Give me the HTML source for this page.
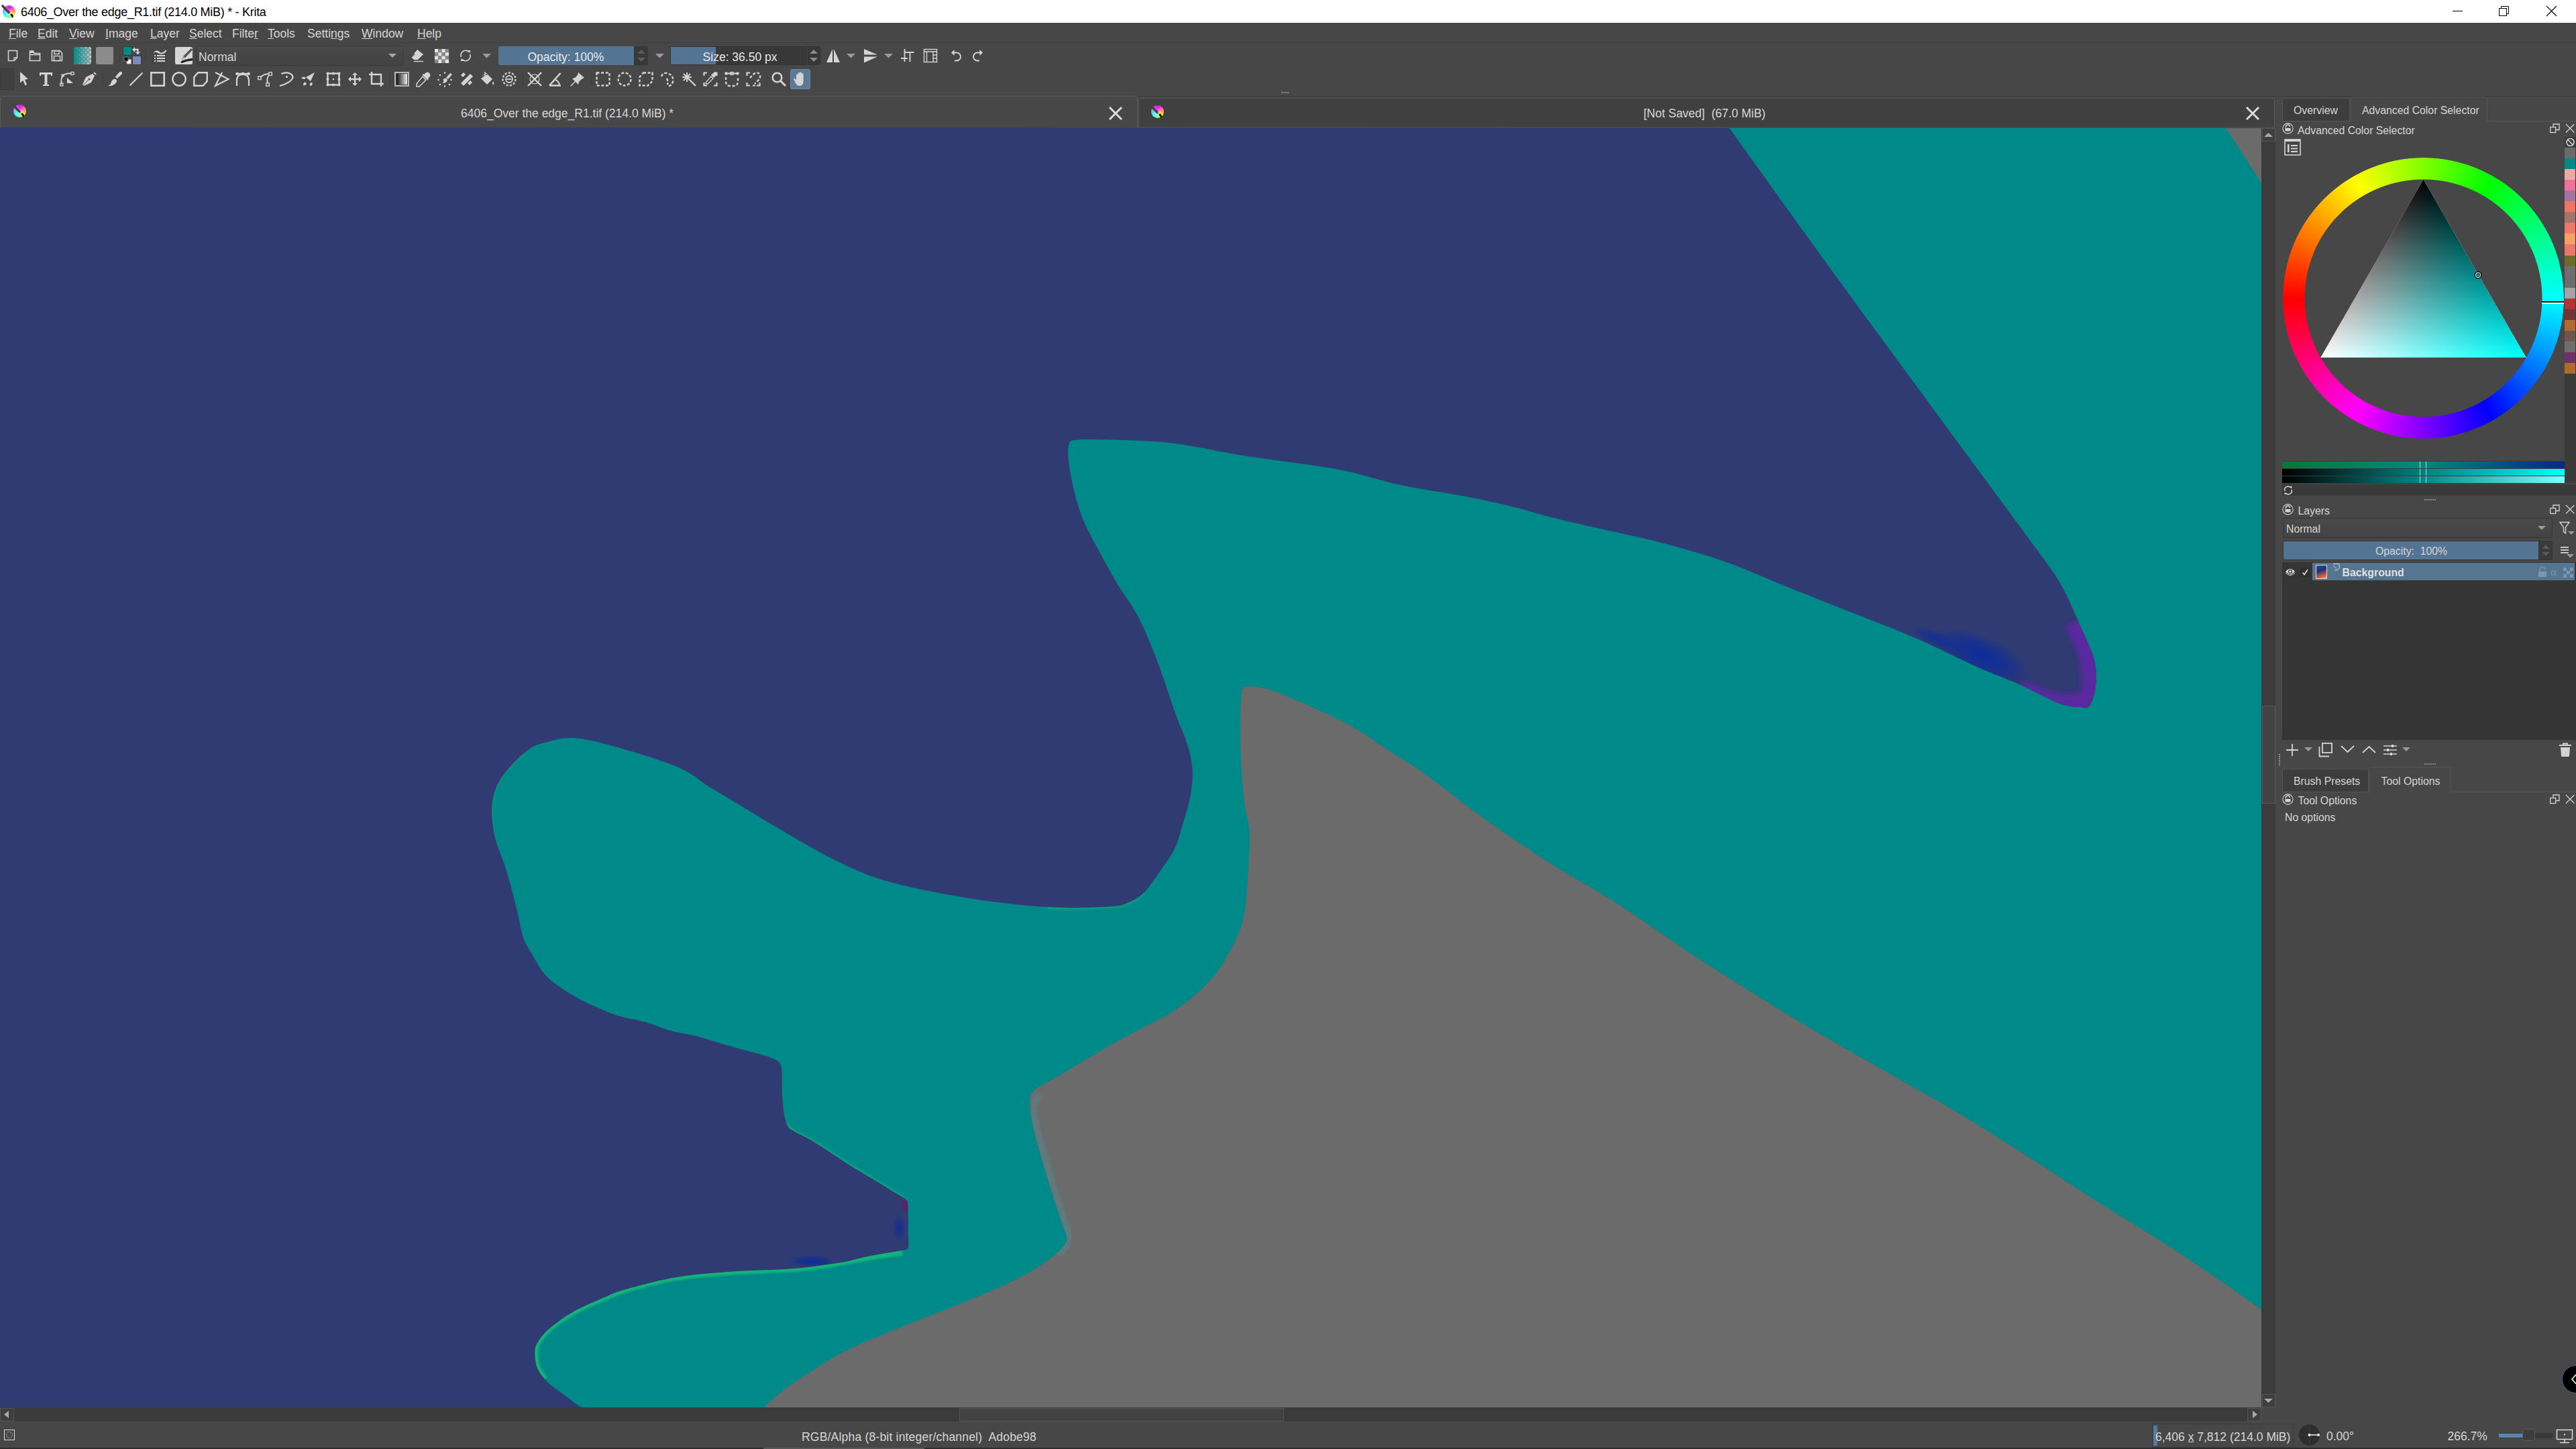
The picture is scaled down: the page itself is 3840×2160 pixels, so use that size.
<!DOCTYPE html>
<html><head><meta charset="utf-8"><title>Krita</title>
<style>
html,body{margin:0;padding:0;}
body{width:3840px;height:2160px;position:relative;overflow:hidden;background:#474747;font-family:"Liberation Sans",sans-serif;}
.t{position:absolute;white-space:pre;line-height:1;}
.r{position:absolute;}
svg.r{overflow:visible;}
</style></head><body>
<div class="r" style="left:0px;top:0px;width:3840px;height:34px;background:#ffffff;"></div><div class="r" style="left:4px;top:7.5px;width:19px;height:19px;border-radius:50%;background:radial-gradient(circle at 40% 60%,rgba(255,255,255,0.45),rgba(255,255,255,0) 55%),conic-gradient(#ff00ff,#ff60b0 50deg,#ffb060 100deg,#ffff00 130deg,#80ff80 180deg,#00ffff 225deg,#60b0ff 270deg,#b070ff 315deg,#ff00ff)"></div><svg class="r" style="left:2px;top:6.5px" width="23" height="23" viewBox="0 0 23 23"><path d="M1.8 1.8 L11.8 12.2" stroke="#404040" stroke-width="3.4" stroke-linecap="round"/><path d="M11.8 12.2 L14 14.4" stroke="#b8b8b8" stroke-width="2.6"/><path d="M13.2 15.2 L15.2 13.2 Q18 14.5 18 17.5 Q17.6 19 16.3 19.8 Q15.6 17 13.2 15.2Z" fill="#111"/></svg><div class="t" style="left:31px;top:9.26px;font-size:18px;color:#000000;font-weight:normal;letter-spacing:-0.29px">6406_Over the edge_R1.tif (214.0 MiB) * - Krita</div><svg class="r" style="left:3650px;top:0px" width="190" height="34"><line x1="6" y1="16.5" x2="21" y2="16.5" stroke="#000" stroke-width="1"/><rect x="75.5" y="12.5" width="11" height="11" fill="none" stroke="#000" stroke-width="1"/><path d="M78.5 12.5 V9.5 H89.5 V20.5 H86.5" fill="none" stroke="#000" stroke-width="1"/><path d="M146 9 L161 24 M161 9 L146 24" stroke="#000" stroke-width="1.1"/></svg><div class="r" style="left:0px;top:34px;width:3840px;height:29px;background:#474747;"></div><div class="r" style="left:0px;top:63px;width:3840px;height:1px;background:#3e3e3e;"></div><div class="t" style="left:13px;top:42.09px;font-size:17.5px;color:#d6d6d6;font-weight:normal;"><u>F</u>ile</div><div class="t" style="left:56px;top:42.09px;font-size:17.5px;color:#d6d6d6;font-weight:normal;"><u>E</u>dit</div><div class="t" style="left:103px;top:42.09px;font-size:17.5px;color:#d6d6d6;font-weight:normal;"><u>V</u>iew</div><div class="t" style="left:157px;top:42.09px;font-size:17.5px;color:#d6d6d6;font-weight:normal;"><u>I</u>mage</div><div class="t" style="left:224px;top:42.09px;font-size:17.5px;color:#d6d6d6;font-weight:normal;"><u>L</u>ayer</div><div class="t" style="left:282px;top:42.09px;font-size:17.5px;color:#d6d6d6;font-weight:normal;"><u>S</u>elect</div><div class="t" style="left:346px;top:42.09px;font-size:17.5px;color:#d6d6d6;font-weight:normal;">Filte<u>r</u></div><div class="t" style="left:399px;top:42.09px;font-size:17.5px;color:#d6d6d6;font-weight:normal;"><u>T</u>ools</div><div class="t" style="left:458px;top:42.09px;font-size:17.5px;color:#d6d6d6;font-weight:normal;">Setti<u>n</u>gs</div><div class="t" style="left:539px;top:42.09px;font-size:17.5px;color:#d6d6d6;font-weight:normal;"><u>W</u>indow</div><div class="t" style="left:622px;top:42.09px;font-size:17.5px;color:#d6d6d6;font-weight:normal;"><u>H</u>elp</div><div class="r" style="left:0px;top:64px;width:3840px;height:79px;background:#474747;"></div><div class="r" style="left:0px;top:143px;width:3840px;height:1px;background:#3a3a3a;"></div><svg class="r" style="left:11px;top:74px;" width="17" height="18" viewBox="0 0 17 18"><path d="M1.5 1.5 H14.5 V12 L10 16.5 H1.5 Z" fill="none" stroke="#d4d4d4" stroke-width="1.6"/><path d="M14.5 12 H10 V16.5" fill="none" stroke="#d4d4d4" stroke-width="1.4"/></svg><svg class="r" style="left:43px;top:74px;" width="18" height="18" viewBox="0 0 18 18"><path d="M1.5 4.5 V16.5 H16.5 V5.5 H8 L6.5 2 H1.5 Z" fill="none" stroke="#d4d4d4" stroke-width="1.6"/><path d="M1.5 7.5 H16.5" fill="none" stroke="#d4d4d4" stroke-width="1.6"/><path d="M2 2 H6.5 L7.5 5 H2Z" fill="#d4d4d4"/></svg><svg class="r" style="left:76px;top:74px;" width="18" height="18" viewBox="0 0 18 18"><path d="M1.5 1.5 H13 L16.5 5 V16.5 H1.5 Z" fill="none" stroke="#d4d4d4" stroke-width="1.6"/><rect x="5" y="2" width="7" height="4.5" fill="none" stroke="#d4d4d4" stroke-width="1.4"/><rect x="4.5" y="9.5" width="9" height="7" fill="none" stroke="#d4d4d4" stroke-width="1.4"/></svg><svg class="r" style="left:110px;top:70px;" width="26" height="26" viewBox="0 0 26 26"><defs><linearGradient id="gsw" x1="0" x2="1"><stop offset="0" stop-color="#008989" stop-opacity="0.97"/><stop offset="0.35" stop-color="#008989" stop-opacity="0.7"/><stop offset="1" stop-color="#008989" stop-opacity="0.12"/></linearGradient><clipPath id="gcl"><rect x="0" y="0" width="26" height="26" rx="3"/></clipPath></defs><g clip-path="url(#gcl)"><rect x="0.0" y="0.0" width="3.25" height="3.25" fill="#a8a8a8"/><rect x="0.0" y="3.25" width="3.25" height="3.25" fill="#e4e4e4"/><rect x="0.0" y="6.5" width="3.25" height="3.25" fill="#a8a8a8"/><rect x="0.0" y="9.75" width="3.25" height="3.25" fill="#e4e4e4"/><rect x="0.0" y="13.0" width="3.25" height="3.25" fill="#a8a8a8"/><rect x="0.0" y="16.25" width="3.25" height="3.25" fill="#e4e4e4"/><rect x="0.0" y="19.5" width="3.25" height="3.25" fill="#a8a8a8"/><rect x="0.0" y="22.75" width="3.25" height="3.25" fill="#e4e4e4"/><rect x="3.25" y="0.0" width="3.25" height="3.25" fill="#e4e4e4"/><rect x="3.25" y="3.25" width="3.25" height="3.25" fill="#a8a8a8"/><rect x="3.25" y="6.5" width="3.25" height="3.25" fill="#e4e4e4"/><rect x="3.25" y="9.75" width="3.25" height="3.25" fill="#a8a8a8"/><rect x="3.25" y="13.0" width="3.25" height="3.25" fill="#e4e4e4"/><rect x="3.25" y="16.25" width="3.25" height="3.25" fill="#a8a8a8"/><rect x="3.25" y="19.5" width="3.25" height="3.25" fill="#e4e4e4"/><rect x="3.25" y="22.75" width="3.25" height="3.25" fill="#a8a8a8"/><rect x="6.5" y="0.0" width="3.25" height="3.25" fill="#a8a8a8"/><rect x="6.5" y="3.25" width="3.25" height="3.25" fill="#e4e4e4"/><rect x="6.5" y="6.5" width="3.25" height="3.25" fill="#a8a8a8"/><rect x="6.5" y="9.75" width="3.25" height="3.25" fill="#e4e4e4"/><rect x="6.5" y="13.0" width="3.25" height="3.25" fill="#a8a8a8"/><rect x="6.5" y="16.25" width="3.25" height="3.25" fill="#e4e4e4"/><rect x="6.5" y="19.5" width="3.25" height="3.25" fill="#a8a8a8"/><rect x="6.5" y="22.75" width="3.25" height="3.25" fill="#e4e4e4"/><rect x="9.75" y="0.0" width="3.25" height="3.25" fill="#e4e4e4"/><rect x="9.75" y="3.25" width="3.25" height="3.25" fill="#a8a8a8"/><rect x="9.75" y="6.5" width="3.25" height="3.25" fill="#e4e4e4"/><rect x="9.75" y="9.75" width="3.25" height="3.25" fill="#a8a8a8"/><rect x="9.75" y="13.0" width="3.25" height="3.25" fill="#e4e4e4"/><rect x="9.75" y="16.25" width="3.25" height="3.25" fill="#a8a8a8"/><rect x="9.75" y="19.5" width="3.25" height="3.25" fill="#e4e4e4"/><rect x="9.75" y="22.75" width="3.25" height="3.25" fill="#a8a8a8"/><rect x="13.0" y="0.0" width="3.25" height="3.25" fill="#a8a8a8"/><rect x="13.0" y="3.25" width="3.25" height="3.25" fill="#e4e4e4"/><rect x="13.0" y="6.5" width="3.25" height="3.25" fill="#a8a8a8"/><rect x="13.0" y="9.75" width="3.25" height="3.25" fill="#e4e4e4"/><rect x="13.0" y="13.0" width="3.25" height="3.25" fill="#a8a8a8"/><rect x="13.0" y="16.25" width="3.25" height="3.25" fill="#e4e4e4"/><rect x="13.0" y="19.5" width="3.25" height="3.25" fill="#a8a8a8"/><rect x="13.0" y="22.75" width="3.25" height="3.25" fill="#e4e4e4"/><rect x="16.25" y="0.0" width="3.25" height="3.25" fill="#e4e4e4"/><rect x="16.25" y="3.25" width="3.25" height="3.25" fill="#a8a8a8"/><rect x="16.25" y="6.5" width="3.25" height="3.25" fill="#e4e4e4"/><rect x="16.25" y="9.75" width="3.25" height="3.25" fill="#a8a8a8"/><rect x="16.25" y="13.0" width="3.25" height="3.25" fill="#e4e4e4"/><rect x="16.25" y="16.25" width="3.25" height="3.25" fill="#a8a8a8"/><rect x="16.25" y="19.5" width="3.25" height="3.25" fill="#e4e4e4"/><rect x="16.25" y="22.75" width="3.25" height="3.25" fill="#a8a8a8"/><rect x="19.5" y="0.0" width="3.25" height="3.25" fill="#a8a8a8"/><rect x="19.5" y="3.25" width="3.25" height="3.25" fill="#e4e4e4"/><rect x="19.5" y="6.5" width="3.25" height="3.25" fill="#a8a8a8"/><rect x="19.5" y="9.75" width="3.25" height="3.25" fill="#e4e4e4"/><rect x="19.5" y="13.0" width="3.25" height="3.25" fill="#a8a8a8"/><rect x="19.5" y="16.25" width="3.25" height="3.25" fill="#e4e4e4"/><rect x="19.5" y="19.5" width="3.25" height="3.25" fill="#a8a8a8"/><rect x="19.5" y="22.75" width="3.25" height="3.25" fill="#e4e4e4"/><rect x="22.75" y="0.0" width="3.25" height="3.25" fill="#e4e4e4"/><rect x="22.75" y="3.25" width="3.25" height="3.25" fill="#a8a8a8"/><rect x="22.75" y="6.5" width="3.25" height="3.25" fill="#e4e4e4"/><rect x="22.75" y="9.75" width="3.25" height="3.25" fill="#a8a8a8"/><rect x="22.75" y="13.0" width="3.25" height="3.25" fill="#e4e4e4"/><rect x="22.75" y="16.25" width="3.25" height="3.25" fill="#a8a8a8"/><rect x="22.75" y="19.5" width="3.25" height="3.25" fill="#e4e4e4"/><rect x="22.75" y="22.75" width="3.25" height="3.25" fill="#a8a8a8"/><rect width="26" height="26" fill="url(#gsw)"/></g></svg><svg class="r" style="left:143px;top:70px;" width="26" height="26" viewBox="0 0 26 26"><defs><filter id="nz" x="0" y="0" width="100%" height="100%"><feTurbulence type="fractalNoise" baseFrequency="0.9" numOctaves="1" seed="3"/><feColorMatrix type="matrix" values="0 0 0 0 0.53  0 0 0 0 0.53  0 0 0 0 0.53  0 0 0 0.35 0"/></filter></defs><rect width="26" height="26" rx="3" fill="#808080"/><rect width="26" height="26" rx="3" filter="url(#nz)"/></svg><div class="r" style="left:178px;top:73px;width:1px;height:20px;background:#3d3d3d"></div><svg class="r" style="left:183px;top:69px;" width="29" height="29" viewBox="0 0 29 29"><rect x="0.5" y="0.5" width="13" height="13" fill="#008989" stroke="#3a3a3a"/><rect x="14.5" y="14.5" width="13" height="13" fill="#7f88b8" stroke="#3a3a3a"/><rect x="6" y="19.7" width="6.5" height="6.5" fill="#fff" stroke="#888" stroke-width="0.8"/><rect x="2" y="16" width="6" height="6" fill="#000" stroke="#888" stroke-width="0.9"/><path d="M17.5 5 H22.4 V8.6" stroke="#d4d4d4" stroke-width="2.6" fill="none"/><rect x="19.3" y="6.2" width="2" height="2" fill="#474747"/><path d="M14 5 L18 1.3 V8.7 Z" fill="#d4d4d4"/><path d="M18.6 8.4 H26.2 L22.4 12.2 Z" fill="#d4d4d4"/></svg><div class="r" style="left:216px;top:73px;width:1px;height:20px;background:#3d3d3d"></div><svg class="r" style="left:228px;top:72px;" width="22" height="22" viewBox="0 0 22 22"><path d="M0.3 8.2 Q3 2.8 6.5 3.6 Q9 4.3 11 6 Q14 8 19 2.6 Q21 2 20 4.5 Q16 9.5 11 8.3 Q8 7.5 6 6.2 Q3 5 0.3 8.2 Z" fill="#d4d4d4"/><rect x="2" y="9.9" width="2.1" height="2.1" fill="#d4d4d4"/><rect x="5.9" y="9.9" width="12.1" height="2.1" fill="#d4d4d4"/><rect x="2" y="13.9" width="2.1" height="2.1" fill="#d4d4d4"/><rect x="5.9" y="13.9" width="12.1" height="2.1" fill="#d4d4d4"/><rect x="2" y="17.9" width="2.1" height="2.1" fill="#d4d4d4"/><rect x="5.9" y="17.9" width="12.1" height="2.1" fill="#d4d4d4"/></svg><svg class="r" style="left:261px;top:70px;" width="26" height="26" viewBox="0 0 26 26"><rect width="26" height="26" rx="2.5" fill="#d6d6d6"/><path d="M12 14 L24 2 L26 4 L26 4.5 L14.5 16.5 Z" fill="#4a4a4a"/><path d="M13.2 15.2 L25 3.3" stroke="#777" stroke-width="0.8"/><path d="M12 14 L14.5 16.5 L9.6 18.6 Z" fill="#a8a8a8"/><path d="M9.6 18.6 L10.6 17 L11.3 17.7 Z" fill="#333"/><path d="M8.5 22 Q12 18.5 26 16.8 V20.3 Q17 21 10.5 24 Q8 24.5 8.5 22 Z" fill="#222"/></svg><div class="r" style="left:292px;top:68px;width:309px;height:30px;background:linear-gradient(#4a4a4a,#424242);border:1px solid #383838;border-radius:3px;box-sizing:border-box"></div><svg class="r" style="left:578px;top:79px;" width="14" height="8" viewBox="0 0 14 8"><path d="M1 1 H13 L7 7 Z" fill="#a8a8a8"/></svg><svg class="r" style="left:611px;top:73px;" width="22" height="20" viewBox="0 0 22 20"><path d="M11 1 L20 8 L12 16 H6 L2 12 Z" fill="#d4d4d4"/><path d="M6 18.5 H20" stroke="#d4d4d4" stroke-width="1.5"/><path d="M2.5 12 L7 7.5" stroke="#474747" stroke-width="1.2"/></svg><svg class="r" style="left:648px;top:73px;" width="21" height="21" viewBox="0 0 21 21"><rect x="0.0" y="0.0" width="5.3" height="5.3" fill="#e6e6e6"/><rect x="0.0" y="5.25" width="5.3" height="5.3" fill="#8a8a8a"/><rect x="0.0" y="10.5" width="5.3" height="5.3" fill="#e6e6e6"/><rect x="0.0" y="15.75" width="5.3" height="5.3" fill="#8a8a8a"/><rect x="5.25" y="0.0" width="5.3" height="5.3" fill="#8a8a8a"/><rect x="5.25" y="5.25" width="5.3" height="5.3" fill="#e6e6e6"/><rect x="5.25" y="10.5" width="5.3" height="5.3" fill="#8a8a8a"/><rect x="5.25" y="15.75" width="5.3" height="5.3" fill="#e6e6e6"/><rect x="10.5" y="0.0" width="5.3" height="5.3" fill="#e6e6e6"/><rect x="10.5" y="5.25" width="5.3" height="5.3" fill="#8a8a8a"/><rect x="10.5" y="10.5" width="5.3" height="5.3" fill="#e6e6e6"/><rect x="10.5" y="15.75" width="5.3" height="5.3" fill="#8a8a8a"/><rect x="15.75" y="0.0" width="5.3" height="5.3" fill="#8a8a8a"/><rect x="15.75" y="5.25" width="5.3" height="5.3" fill="#e6e6e6"/><rect x="15.75" y="10.5" width="5.3" height="5.3" fill="#8a8a8a"/><rect x="15.75" y="15.75" width="5.3" height="5.3" fill="#e6e6e6"/></svg><svg class="r" style="left:684px;top:73px;" width="20" height="20" viewBox="0 0 20 20"><path d="M3.5 12 A7 7 0 0 1 15 4.5" fill="none" stroke="#d4d4d4" stroke-width="1.8"/><path d="M16.5 8 A7 7 0 0 1 5 15.5" fill="none" stroke="#d4d4d4" stroke-width="1.8"/><path d="M13 2 L17 2 L17 6Z" fill="#d4d4d4"/><path d="M7 18 L3 18 L3 14Z" fill="#d4d4d4"/></svg><svg class="r" style="left:719px;top:80px;" width="13" height="7" viewBox="0 0 13 7"><path d="M0 0 H13 L6.5 6.5 Z" fill="#9a9a9a"/></svg><div class="r" style="left:743px;top:69px;width:223px;height:28px;background:#383838;border:1px solid #353535;border-radius:3px;box-sizing:border-box"></div><div class="r" style="left:743px;top:69px;width:202px;height:28px;background:#547494;border-radius:3px 0 0 3px"></div><svg class="r" style="left:946px;top:69px;" width="20" height="28" viewBox="0 0 20 28"><path d="M4 11 L10 5 L16 11 Z" fill="#5c5c5c"/><path d="M4 17 L10 23 L16 17 Z" fill="#5c5c5c"/></svg><svg class="r" style="left:977px;top:80px;" width="13" height="7" viewBox="0 0 13 7"><path d="M0 0 H13 L6.5 6.5 Z" fill="#9a9a9a"/></svg><div class="r" style="left:999px;top:69px;width:224px;height:28px;background:#383838;border:1px solid #333;border-radius:3px;box-sizing:border-box"></div><div class="r" style="left:1000px;top:70px;width:67px;height:26px;background:#547494"></div><div class="r" style="left:1203px;top:69px;width:20px;height:28px;border-left:1px solid #444;box-sizing:border-box"></div><svg class="r" style="left:1203px;top:69px;" width="20" height="28" viewBox="0 0 20 28"><path d="M4 11 L10 5 L16 11 Z" fill="#8a8a8a"/><path d="M4 17 L10 23 L16 17 Z" fill="#8a8a8a"/></svg><svg class="r" style="left:1231px;top:73px;" width="22" height="21" viewBox="0 0 22 21"><path d="M10 0 V20 H1 Z" fill="#d4d4d4"/><path d="M12 0 V20 H21 Z" fill="#d4d4d4"/></svg><svg class="r" style="left:1262px;top:80px;" width="13" height="7" viewBox="0 0 13 7"><path d="M0 0 H13 L6.5 6.5 Z" fill="#9a9a9a"/></svg><svg class="r" style="left:1287px;top:73px;" width="22" height="21" viewBox="0 0 22 21"><path d="M1 0 L21 8.5 H1 Z" fill="#d4d4d4"/><path d="M1 20.5 L21 11.5 H1 Z" fill="#d4d4d4"/></svg><svg class="r" style="left:1318px;top:80px;" width="13" height="7" viewBox="0 0 13 7"><path d="M0 0 H13 L6.5 6.5 Z" fill="#9a9a9a"/></svg><svg class="r" style="left:1342px;top:72px;" width="22" height="22" viewBox="0 0 22 22"><path d="M6.5 1 V20 M1 15 H11 M6.5 6 H20.5 M14.5 6 V20" fill="none" stroke="#d4d4d4" stroke-width="1.8"/></svg><svg class="r" style="left:1376px;top:72px;" width="22" height="22" viewBox="0 0 22 22"><rect x="1.5" y="1.5" width="19" height="19" fill="none" stroke="#d4d4d4" stroke-width="1.4"/><path d="M1.5 5 H20.5" fill="none" stroke="#d4d4d4" stroke-width="1.6"/><path d="M5.5 5 V20.5 M15 5 V20.5 M15 10 H20.5 M15 15 H20.5" fill="none" stroke="#d4d4d4" stroke-width="1.4"/></svg><svg class="r" style="left:1417px;top:73px;" width="17" height="20" viewBox="0 0 17 20"><path d="M4 5.5 H9 A6 6 0 0 1 9 17.5 H6" fill="none" stroke="#d4d4d4" stroke-width="1.8"/><path d="M1 5.5 L5.5 1 V10 Z" fill="#d4d4d4"/></svg><svg class="r" style="left:1449px;top:73px;" width="17" height="20" viewBox="0 0 17 20"><path d="M13 5.5 H8 A6 6 0 0 0 8 17.5 H11" fill="none" stroke="#d4d4d4" stroke-width="1.8"/><path d="M16 5.5 L11.5 1 V10 Z" fill="#d4d4d4"/></svg><div class="r" style="left:1910px;top:137px;width:12px;height:2px;background:repeating-linear-gradient(90deg,#888 0 2px,transparent 2px 3px)"></div><div class="r" style="left:0px;top:102px;width:21px;height:32px;background:#404040;border:1px solid #3a3a3a;box-sizing:border-box"></div><svg class="r" style="left:28px;top:107px;" width="22" height="22" viewBox="0 0 22 22"><path d="M2 0 L14 11 L9 11.5 L12 19 L9.5 20.5 L6.5 13 L2 16.5 Z" fill="#d4d4d4"/></svg><svg class="r" style="left:58px;top:107px;" width="22" height="22" viewBox="0 0 22 22"><path d="M1 1 H20 V6 H18 V4 H12.5 V19 H15 V21 H6 V19 H8.5 V4 H3 V6 H1 Z" fill="#d4d4d4"/></svg><svg class="r" style="left:89px;top:107px;" width="22" height="22" viewBox="0 0 22 22"><path d="M2.5 19 V12 Q3 4 12 2.5 H17" fill="none" stroke="#d4d4d4" stroke-width="1.8"/><rect x="0.8" y="17" width="4" height="4" fill="none" stroke="#d4d4d4" stroke-width="1.3"/><rect x="3" y="4" width="3" height="3" fill="none" stroke="#d4d4d4" stroke-width="1.2"/><rect x="17" y="0.5" width="4" height="4" fill="none" stroke="#d4d4d4" stroke-width="1.3"/><path d="M11 9 L20 17 H11 Z" fill="#d4d4d4"/></svg><svg class="r" style="left:122px;top:107px;" width="22" height="22" viewBox="0 0 22 22"><path d="M18 1 L21 4" fill="none" stroke="#d4d4d4" stroke-width="2"/><path d="M16 3 L19 6 L14 16 L3 21 L1 19 L6 8 Z" fill="#d4d4d4"/><circle cx="11" cy="11" r="1.5" fill="#474747"/><path d="M2 20 L10.5 11.5" stroke="#474747" stroke-width="1"/></svg><div class="r" style="left:153px;top:108px;width:1px;height:20px;background:#3d3d3d"></div><svg class="r" style="left:160px;top:107px;" width="22" height="22" viewBox="0 0 22 22"><path d="M16.3 5.7 L19.8 2.2" stroke="#d4d4d4" stroke-width="4.6" stroke-linecap="round"/><path d="M13.2 8.8 L15 7" stroke="#d4d4d4" stroke-width="4.2"/><path d="M11.8 10.4 L14.3 12.9 Q13.5 20.5 0.8 21.5 Q5 19.3 5.8 15.5 Q7 10.8 11.8 10.4 Z" fill="#d4d4d4"/></svg><svg class="r" style="left:192px;top:107px;" width="22" height="22" viewBox="0 0 22 22"><path d="M1.5 20.5 L20.5 1.5" fill="none" stroke="#d4d4d4" stroke-width="2.2"/></svg><svg class="r" style="left:224px;top:107px;" width="22" height="22" viewBox="0 0 22 22"><rect x="1.3" y="1.3" width="19.4" height="19.4" fill="none" stroke="#d4d4d4" stroke-width="2.6"/></svg><svg class="r" style="left:256px;top:107px;" width="22" height="22" viewBox="0 0 22 22"><circle cx="11" cy="11" r="9.7" fill="none" stroke="#d4d4d4" stroke-width="2.4"/></svg><svg class="r" style="left:288px;top:107px;" width="22" height="22" viewBox="0 0 22 22"><path d="M7 1.3 H20.7 V14 L14.5 20.7 H1.3 V8 Z" fill="none" stroke="#d4d4d4" stroke-width="2.4"/></svg><svg class="r" style="left:320px;top:107px;" width="22" height="22" viewBox="0 0 22 22"><path d="M1 1 L20.5 11 L1 21 L11 1" fill="none" stroke="#d4d4d4" stroke-width="2.2" stroke-linejoin="miter"/></svg><svg class="r" style="left:351px;top:107px;" width="22" height="22" viewBox="0 0 22 22"><path d="M2 21 V13 Q2 4 11 4 Q20 4 20 13 V21" fill="none" stroke="#d4d4d4" stroke-width="2.2"/><path d="M1 3 H21" fill="none" stroke="#d4d4d4" stroke-width="2.4"/><circle cx="2.5" cy="3" r="2.3" fill="#d4d4d4"/><circle cx="19.5" cy="3" r="2.3" fill="#d4d4d4"/><rect x="9" y="1" width="4" height="4" fill="#d4d4d4"/></svg><svg class="r" style="left:384px;top:107px;" width="22" height="22" viewBox="0 0 22 22"><path d="M4.5 8.5 Q8 3.5 17 3" fill="none" stroke="#d4d4d4" stroke-width="2"/><path d="M17 5 Q13 10 15 17" fill="none" stroke="#d4d4d4" stroke-width="2"/><rect x="0.8" y="7" width="4.5" height="4.5" fill="none" stroke="#d4d4d4" stroke-width="1.4"/><rect x="16.8" y="0.8" width="4.5" height="4.5" fill="none" stroke="#d4d4d4" stroke-width="1.4"/><rect x="12.8" y="16.8" width="4.5" height="4.5" fill="none" stroke="#d4d4d4" stroke-width="1.4"/></svg><svg class="r" style="left:416px;top:107px;" width="22" height="22" viewBox="0 0 22 22"><path d="M3.5 3 Q10 0 16 2.5 Q22 5 20 10 Q16 17 1 21" fill="none" stroke="#d4d4d4" stroke-width="2.2"/><circle cx="11.5" cy="7.5" r="1.6" fill="#d4d4d4"/></svg><svg class="r" style="left:448px;top:107px;" width="22" height="22" viewBox="0 0 22 22"><path d="M8 8 L21 1 L15 14 Z" fill="#d4d4d4"/><path d="M1 9 Q5 6 8 9 L6 11 Q3 11 1 9Z" fill="#d4d4d4"/><path d="M4 20 Q4 15 8 16 L9 18 Q7 21 4 20Z" fill="#d4d4d4"/><path d="M14 21 Q13 16 17 16 L18 18 Q17 21 14 21Z" fill="#d4d4d4"/></svg><div class="r" style="left:478px;top:108px;width:1px;height:20px;background:#3d3d3d"></div><svg class="r" style="left:486px;top:107px;" width="22" height="22" viewBox="0 0 22 22"><rect x="2.5" y="2.5" width="17" height="17" fill="none" stroke="#d4d4d4" stroke-width="2.4"/><circle cx="2.5" cy="2.5" r="2" fill="#d4d4d4"/><circle cx="2.5" cy="11" r="2" fill="#d4d4d4"/><circle cx="2.5" cy="19.5" r="2" fill="#d4d4d4"/><circle cx="11" cy="2.5" r="2" fill="#d4d4d4"/><circle cx="11" cy="19.5" r="2" fill="#d4d4d4"/><circle cx="19.5" cy="2.5" r="2" fill="#d4d4d4"/><circle cx="19.5" cy="11" r="2" fill="#d4d4d4"/><circle cx="19.5" cy="19.5" r="2" fill="#d4d4d4"/><circle cx="11" cy="11" r="1.3" fill="#d4d4d4"/></svg><svg class="r" style="left:518px;top:107px;" width="22" height="22" viewBox="0 0 22 22"><path d="M11 1 L15 5 H12.2 V9.8 H17 V7 L21 11 L17 15 V12.2 H12.2 V17 H15 L11 21 L7 17 H9.8 V12.2 H5 V15 L1 11 L5 7 V9.8 H9.8 V5 H7 Z" fill="#d4d4d4"/></svg><svg class="r" style="left:550px;top:107px;" width="22" height="22" viewBox="0 0 22 22"><path d="M4 0 V18 H22 M0 4 H18 V22" fill="none" stroke="#d4d4d4" stroke-width="2.4"/></svg><div class="r" style="left:581px;top:108px;width:1px;height:20px;background:#3d3d3d"></div><svg class="r" style="left:588px;top:107px;" width="22" height="22" viewBox="0 0 22 22"><defs><linearGradient id="gt" x1="0" x2="1"><stop offset="0" stop-color="#111"/><stop offset="1" stop-color="#eee"/></linearGradient></defs><rect x="1" y="1" width="20" height="20" fill="none" stroke="#d4d4d4" stroke-width="1.6"/><rect x="3" y="3" width="16" height="16" fill="url(#gt)"/></svg><svg class="r" style="left:620px;top:107px;" width="22" height="22" viewBox="0 0 22 22"><path d="M14 2 Q17 -1 20 2 Q23 5 20 8 L18 10 L19 11 L17.5 12.5 L9.5 4.5 L11 3 L12 4 Z" fill="#d4d4d4"/><path d="M10 7 L15 12 L5 22 H1 V18 Z" fill="none" stroke="#d4d4d4" stroke-width="1.5"/></svg><svg class="r" style="left:652px;top:107px;" width="22" height="22" viewBox="0 0 22 22"><path d="M13 9 L19 2 L22 4 L16 11 Z" fill="#d4d4d4"/><path d="M9 11 Q13 8 15 12 Q14 17 8 17 Q10 14 9 11Z" fill="#d4d4d4"/><circle cx="11" cy="1.5" r="1.3" fill="#d4d4d4"/><circle cx="4" cy="5" r="1.3" fill="#d4d4d4"/><circle cx="1.5" cy="12" r="1.3" fill="#d4d4d4"/><circle cx="4" cy="19" r="1.3" fill="#d4d4d4"/><circle cx="11" cy="21.5" r="1.3" fill="#d4d4d4"/><circle cx="18" cy="19" r="1.3" fill="#d4d4d4"/><circle cx="20.5" cy="12" r="1.3" fill="#d4d4d4"/></svg><svg class="r" style="left:684px;top:107px;" width="22" height="22" viewBox="0 0 22 22"><path d="M3 17 L17 3 L21 7 L7 21 Z" fill="#d4d4d4"/><path d="M3 5 L7 1 L10 4 L6 8 Z" fill="#d4d4d4"/><path d="M13 17 L17 13 L20 16 L16 20 Z" fill="#d4d4d4"/></svg><svg class="r" style="left:716px;top:107px;" width="22" height="22" viewBox="0 0 22 22"><path d="M6 0.5 L8 2.5 L3 7" fill="none" stroke="#d4d4d4" stroke-width="1.6"/><path d="M1 10 L9 2 L18 11 L10 19 Z" fill="#d4d4d4"/><path d="M2 10 L9 3 L11 5 H4 Z" fill="#474747"/><path d="M19 14 Q21 17 20 19 Q18 20 18 17 Z" fill="#d4d4d4"/></svg><svg class="r" style="left:748px;top:107px;" width="22" height="22" viewBox="0 0 22 22"><circle cx="11" cy="11" r="9.5" fill="none" stroke="#d4d4d4" stroke-width="2.3" stroke-dasharray="3.2 2.2"/><circle cx="11" cy="11" r="5" fill="none" stroke="#d4d4d4" stroke-width="1.8"/><rect x="7.5" y="10.2" width="7" height="1.8" fill="#d4d4d4"/></svg><div class="r" style="left:779px;top:108px;width:1px;height:20px;background:#3d3d3d"></div><svg class="r" style="left:786px;top:107px;" width="22" height="22" viewBox="0 0 22 22"><path d="M1 1 L21 21 M21 1 L1 21" fill="none" stroke="#d4d4d4" stroke-width="2.4"/><circle cx="11" cy="11" r="7" fill="none" stroke="#d4d4d4" stroke-width="1.2"/></svg><svg class="r" style="left:817px;top:107px;" width="22" height="22" viewBox="0 0 22 22"><path d="M2 20.5 H19 M2 20.5 L18.5 2" fill="none" stroke="#d4d4d4" stroke-width="2.6"/><path d="M11 12 Q16 14 17 20" fill="none" stroke="#d4d4d4" stroke-width="2"/></svg><svg class="r" style="left:850px;top:107px;" width="22" height="22" viewBox="0 0 22 22"><path d="M12 1 L21 9 L17 11 L13 15 L12 19 L3 10 L7 9 L11 5 Z" fill="#d4d4d4"/><path d="M0.5 21.5 L8 14" fill="none" stroke="#d4d4d4" stroke-width="1.4"/></svg><div class="r" style="left:881px;top:108px;width:1px;height:20px;background:#3d3d3d"></div><svg class="r" style="left:888px;top:107px;" width="22" height="22" viewBox="0 0 22 22"><rect x="1.5" y="1.5" width="19" height="19" fill="none" stroke="#d4d4d4" stroke-width="2.4" stroke-dasharray="4 2.6"/></svg><svg class="r" style="left:920px;top:107px;" width="22" height="22" viewBox="0 0 22 22"><circle cx="11" cy="11" r="9.5" fill="none" stroke="#d4d4d4" stroke-width="2.4" stroke-dasharray="4 2.6"/></svg><svg class="r" style="left:952px;top:107px;" width="22" height="22" viewBox="0 0 22 22"><path d="M7 1.5 H20.5 V14 L14 20.5 H1.5 V8 Z" fill="none" stroke="#d4d4d4" stroke-width="2.4" stroke-dasharray="4 2.6"/></svg><svg class="r" style="left:984px;top:107px;" width="22" height="22" viewBox="0 0 22 22"><path d="M2 7 Q4 1 10 2 Q21 5 19 15 Q17 21 13 21" fill="none" stroke="#d4d4d4" stroke-width="2.4" stroke-dasharray="4 2.6"/><path d="M10 10 Q12 13 11 19" fill="none" stroke="#d4d4d4" stroke-width="2.4" stroke-dasharray="4 2.6"/></svg><svg class="r" style="left:1016px;top:107px;" width="22" height="22" viewBox="0 0 22 22"><path d="M8 1 V15 M1 8 H15 M3 3 L13 13 M13 3 L3 13" fill="none" stroke="#d4d4d4" stroke-width="2"/><path d="M10 10 L21 21" fill="none" stroke="#d4d4d4" stroke-width="2.2"/></svg><svg class="r" style="left:1048px;top:107px;" width="22" height="22" viewBox="0 0 22 22"><path d="M1.5 6 V1.5 H6 M16 1.5 H20.5 V6 M20.5 16 V20.5 H16 M6 20.5 H1.5 V16" fill="none" stroke="#d4d4d4" stroke-width="2.2"/><path d="M15 2 Q18 0 20 2 Q21 4 19 6 L16 9 L12 5 Z" fill="#d4d4d4"/><path d="M12 7 L15 10 L7 18 H4.5 V15.5 Z" fill="none" stroke="#d4d4d4" stroke-width="1.3"/></svg><svg class="r" style="left:1080px;top:107px;" width="22" height="22" viewBox="0 0 22 22"><path d="M2 8 V14 Q2 21 8 21 H14 Q20 21 20 14 V8" fill="none" stroke="#d4d4d4" stroke-width="2.4" stroke-dasharray="4 2.6"/><path d="M1 2.5 H21" fill="none" stroke="#d4d4d4" stroke-width="2.2"/><circle cx="2.5" cy="2.5" r="2.2" fill="#d4d4d4"/><circle cx="19.5" cy="2.5" r="2.2" fill="#d4d4d4"/><rect x="9" y="0.5" width="4" height="4" fill="none" stroke="#d4d4d4" stroke-width="1.2"/></svg><svg class="r" style="left:1112px;top:107px;" width="22" height="22" viewBox="0 0 22 22"><path d="M1.5 6 V1.5 H6 M1.5 16 V20.5 H6 M10 20.5 H14 M20.5 16 V20.5 H16" fill="none" stroke="#d4d4d4" stroke-width="2.2"/><path d="M6 9 L12 3 Q18 -1 21 5 Q22 10 17 14 L13 18" fill="none" stroke="#d4d4d4" stroke-width="2.4" stroke-dasharray="4 2.6"/></svg><div class="r" style="left:1143px;top:108px;width:1px;height:20px;background:#3d3d3d"></div><svg class="r" style="left:1150px;top:107px;" width="22" height="22" viewBox="0 0 22 22"><circle cx="8.5" cy="8.5" r="6.8" fill="none" stroke="#d4d4d4" stroke-width="2.6"/><path d="M13.5 13.5 L21 21" fill="none" stroke="#d4d4d4" stroke-width="3"/></svg><div class="r" style="left:1178px;top:103px;width:30px;height:30px;background:#5b7896;border:1px solid #6e8aa6;border-radius:3px;box-sizing:border-box"></div><svg class="r" style="left:1182px;top:107px;" width="22" height="22" viewBox="0 0 22 22"><path d="M5 12 V5 Q5 3.5 6.3 3.5 Q7.6 3.5 7.6 5 V10 V2.5 Q7.6 1 9 1 Q10.3 1 10.3 2.5 V10 V1.8 Q10.3 0.5 11.6 0.5 Q13 0.5 13 1.8 V10 V3.5 Q13 2.2 14.3 2.2 Q15.6 2.2 15.6 3.5 V14 Q15.6 21 10 21 Q6 21 4 17 L1 11 Q1 9.5 2.5 9.8 Z" fill="#d4d4d4"/></svg><div class="t" style="left:296px;top:76.89px;font-size:17.5px;color:#d6d6d6;font-weight:normal;">Normal</div><div class="t" style="left:786.5px;top:77.19px;font-size:17.5px;color:#e8e8e8;font-weight:normal;">Opacity: 100%</div><div class="t" style="left:1047.6px;top:77.19px;font-size:17.5px;color:#e8e8e8;font-weight:normal;">Size: 36.50 px</div><div class="r" style="left:0px;top:144px;width:3391px;height:47px;background:#474747;"></div><div class="r" style="left:0px;top:143px;width:1696px;height:48px;background:#474747;border-top:1px solid #5a5a5a;border-left:1px solid #5a5a5a;border-right:1px solid #5a5a5a;box-sizing:border-box;border-radius:3px 3px 0 0"></div><div class="r" style="left:20px;top:156px;width:19px;height:19px;border-radius:50%;background:radial-gradient(circle at 40% 60%,rgba(255,255,255,0.45),rgba(255,255,255,0) 55%),conic-gradient(#ff00ff,#ff60b0 50deg,#ffb060 100deg,#ffff00 130deg,#80ff80 180deg,#00ffff 225deg,#60b0ff 270deg,#b070ff 315deg,#ff00ff)"></div><svg class="r" style="left:18px;top:155px" width="23" height="23" viewBox="0 0 23 23"><path d="M1.8 1.8 L11.8 12.2" stroke="#404040" stroke-width="3.4" stroke-linecap="round"/><path d="M11.8 12.2 L14 14.4" stroke="#b8b8b8" stroke-width="2.6"/><path d="M13.2 15.2 L15.2 13.2 Q18 14.5 18 17.5 Q17.6 19 16.3 19.8 Q15.6 17 13.2 15.2Z" fill="#111"/></svg><div class="t" style="left:687px;top:161.39px;font-size:17.5px;color:#d6d6d6;font-weight:normal;">6406_Over the edge_R1.tif (214.0 MiB) *</div><div class="r" style="left:1697px;top:146px;width:1694px;height:44px;background:#404040;border:1px solid #585858;box-sizing:border-box;border-radius:3px 3px 0 0"></div><div class="r" style="left:1697px;top:189px;width:1694px;height:2px;background:#4a4a4a;"></div><div class="r" style="left:1716px;top:157px;width:19px;height:19px;border-radius:50%;background:radial-gradient(circle at 40% 60%,rgba(255,255,255,0.45),rgba(255,255,255,0) 55%),conic-gradient(#ff00ff,#ff60b0 50deg,#ffb060 100deg,#ffff00 130deg,#80ff80 180deg,#00ffff 225deg,#60b0ff 270deg,#b070ff 315deg,#ff00ff)"></div><svg class="r" style="left:1714px;top:156px" width="23" height="23" viewBox="0 0 23 23"><path d="M1.8 1.8 L11.8 12.2" stroke="#404040" stroke-width="3.4" stroke-linecap="round"/><path d="M11.8 12.2 L14 14.4" stroke="#b8b8b8" stroke-width="2.6"/><path d="M13.2 15.2 L15.2 13.2 Q18 14.5 18 17.5 Q17.6 19 16.3 19.8 Q15.6 17 13.2 15.2Z" fill="#111"/></svg><div class="t" style="left:2450px;top:161.39px;font-size:17.5px;color:#d6d6d6;font-weight:normal;">[Not Saved]&nbsp; (67.0 MiB)</div><svg class="r" style="left:1650.5px;top:157px" width="24" height="24"><path d="M3 3 L21 21 M21 3 L3 21" stroke="#dcdcdc" stroke-width="3"/></svg><svg class="r" style="left:3346.3px;top:157px" width="24" height="24"><path d="M3 3 L21 21 M21 3 L3 21" stroke="#dcdcdc" stroke-width="3"/></svg><svg class="r" style="left:0;top:191px" width="3371" height="1907" viewBox="0 191 3371 1907"><rect x="0" y="191" width="3371" height="1907" fill="#008989"/><defs><filter id="gb" x="-5%" y="-5%" width="110%" height="110%"><feGaussianBlur stdDeviation="1.8"/></filter></defs><g filter="url(#gb)"><path d="M1345.0,1867.0 C1337.5,1868.0 1317.8,1870.1 1300.0,1873.0 C1282.2,1875.9 1257.5,1881.2 1238.0,1884.2 C1218.5,1887.2 1207.2,1889.2 1182.8,1891.1 C1158.4,1893.0 1120.4,1893.5 1091.4,1895.6 C1062.4,1897.7 1035.1,1899.5 1008.6,1903.9 C982.1,1908.3 951.2,1916.7 932.4,1922.1 C913.6,1927.5 907.5,1931.4 895.9,1936.2 C884.3,1941.0 872.4,1946.1 862.8,1951.1 C853.1,1956.1 846.3,1960.2 838.0,1966.0 C829.7,1971.8 819.5,1979.6 813.1,1985.9 C806.8,1992.2 802.5,1998.6 799.9,2004.1 C797.3,2009.6 797.1,2012.9 797.4,2019.0 C797.7,2025.1 799.1,2034.3 801.5,2040.5 C803.9,2046.7 810.2,2053.4 812.0,2056.0" fill="none" stroke="#20d070" stroke-opacity="0.6" stroke-width="10"/><path d="M1172.0,1675.0 C1173.6,1676.7 1174.5,1680.6 1181.7,1685.3 C1188.9,1690.0 1200.9,1694.7 1214.9,1703.2 C1229.0,1711.7 1251.1,1727.0 1266.0,1736.4 C1280.9,1745.8 1292.4,1752.2 1304.3,1759.4 C1316.2,1766.6 1329.6,1774.9 1337.5,1779.8 C1345.4,1784.7 1349.2,1787.5 1351.5,1789.0" fill="none" stroke="#10c070" stroke-opacity="0.5" stroke-width="5"/><path d="M782.8,1121.4 C778.2,1126.0 762.6,1139.8 755.2,1149.0 C747.8,1158.2 742.3,1166.5 738.6,1176.6 C734.9,1186.7 733.5,1199.1 733.1,1209.7 C732.7,1220.3 735.5,1235.0 736.0,1240.0" fill="none" stroke="#10b060" stroke-opacity="0.35" stroke-width="4"/><path d="M1560.0,1353.0 C1564.7,1353.0 1571.6,1353.3 1588.0,1353.0 C1604.4,1352.7 1643.0,1352.5 1658.6,1351.3 C1674.2,1350.0 1674.0,1348.9 1681.7,1345.5 C1689.4,1342.1 1701.1,1333.4 1705.0,1331.0" fill="none" stroke="#10c070" stroke-opacity="0.45" stroke-width="5"/></g><path d="M2578.0,191.0 C2601.8,224.2 2674.2,325.4 2721.0,390.0 C2767.8,454.6 2813.4,516.5 2859.0,578.6 C2904.6,640.7 2963.6,720.5 2994.4,762.4 C3025.2,804.3 3030.7,811.1 3044.0,829.8 C3057.3,848.5 3064.1,856.3 3074.0,874.5 C3083.9,892.7 3095.7,920.8 3103.7,939.0 C3111.7,957.2 3118.6,969.8 3122.0,983.9 C3125.4,998.0 3125.2,1012.2 3124.0,1023.6 C3122.8,1035.0 3119.0,1046.9 3115.0,1052.0 C3111.0,1057.1 3107.7,1054.6 3100.0,1054.0 C3092.3,1053.4 3084.1,1054.1 3069.0,1048.4 C3053.9,1042.7 3030.0,1029.1 3009.7,1020.0 C2989.4,1010.9 2973.2,1005.7 2947.0,994.0 C2920.8,982.3 2884.2,963.6 2852.8,950.0 C2821.4,936.4 2790.1,925.1 2758.7,912.6 C2727.3,900.1 2696.0,887.6 2664.6,875.0 C2633.2,862.4 2601.9,848.0 2570.5,837.0 C2539.1,826.0 2506.7,817.0 2476.4,809.0 C2446.2,801.0 2415.2,795.0 2389.0,789.0 C2362.8,783.0 2342.3,778.6 2319.0,772.8 C2295.7,767.0 2272.7,759.7 2249.4,754.1 C2226.2,748.5 2206.7,744.2 2179.5,739.0 C2152.3,733.8 2117.5,729.3 2086.4,722.7 C2055.3,716.1 2031.1,706.5 1993.2,699.4 C1955.3,692.3 1895.0,685.8 1858.8,680.0 C1822.6,674.2 1799.0,668.6 1776.0,664.9 C1753.0,661.2 1743.8,659.6 1720.8,658.0 C1697.8,656.4 1657.6,655.5 1638.0,655.2 C1618.4,654.9 1610.3,655.0 1603.0,656.0 C1595.7,657.0 1595.8,656.5 1594.0,661.0 C1592.2,665.5 1591.6,672.3 1592.5,682.8 C1593.4,693.3 1596.0,709.5 1599.4,724.2 C1602.8,738.9 1606.6,754.9 1613.0,771.0 C1619.4,787.1 1629.2,804.2 1638.0,820.8 C1646.8,837.4 1655.8,854.0 1665.6,870.5 C1675.4,887.0 1686.9,900.4 1697.0,920.0 C1707.1,939.6 1716.7,963.7 1726.0,988.0 C1735.3,1012.3 1745.9,1046.5 1753.0,1066.0 C1760.1,1085.5 1764.4,1091.8 1768.5,1105.0 C1772.6,1118.2 1776.4,1132.0 1777.4,1145.5 C1778.4,1159.0 1776.9,1172.0 1774.5,1186.0 C1772.1,1200.0 1766.8,1216.5 1762.9,1229.6 C1759.0,1242.6 1756.6,1253.2 1751.3,1264.3 C1746.0,1275.4 1738.7,1285.1 1731.0,1296.2 C1723.3,1307.3 1713.2,1322.8 1705.0,1331.0 C1696.8,1339.2 1689.4,1342.1 1681.7,1345.5 C1674.0,1348.9 1674.2,1350.0 1658.6,1351.3 C1643.0,1352.5 1613.8,1353.7 1588.0,1353.0 C1562.2,1352.3 1534.9,1350.6 1503.6,1347.0 C1472.3,1343.4 1432.7,1337.5 1400.0,1331.2 C1367.3,1324.9 1334.2,1317.8 1307.2,1309.0 C1280.2,1300.2 1261.2,1290.2 1238.2,1278.7 C1215.2,1267.2 1189.9,1252.0 1169.2,1240.0 C1148.5,1228.0 1132.4,1218.0 1114.0,1207.0 C1095.6,1196.0 1077.2,1184.8 1058.8,1173.8 C1040.4,1162.8 1034.9,1152.7 1003.6,1140.7 C972.3,1128.7 903.2,1107.5 871.0,1102.0 C838.8,1096.5 825.1,1104.4 810.4,1107.6 C795.7,1110.8 792.0,1114.5 782.8,1121.4 C773.6,1128.3 762.6,1139.8 755.2,1149.0 C747.8,1158.2 742.3,1166.5 738.6,1176.6 C734.9,1186.7 733.1,1197.3 733.1,1209.7 C733.1,1222.1 735.4,1237.7 738.6,1251.0 C741.8,1264.3 748.2,1276.9 752.4,1289.8 C756.5,1302.7 760.3,1316.5 763.5,1328.4 C766.7,1340.4 769.0,1350.0 771.8,1361.5 C774.5,1373.0 776.7,1387.7 780.0,1397.4 C783.3,1407.2 786.6,1411.2 791.7,1420.0 C796.8,1428.8 803.9,1442.3 810.5,1450.5 C817.1,1458.7 823.8,1463.4 831.6,1469.3 C839.4,1475.2 848.4,1480.6 857.4,1485.7 C866.4,1490.8 875.0,1495.1 885.6,1499.8 C896.2,1504.5 908.3,1510.0 920.8,1513.9 C933.3,1517.8 947.0,1519.3 960.7,1523.2 C974.4,1527.1 990.0,1533.8 1002.9,1537.3 C1015.8,1540.8 1024.3,1540.9 1038.0,1544.4 C1051.7,1547.9 1069.3,1553.9 1085.0,1558.4 C1100.7,1562.9 1120.3,1567.8 1132.0,1571.3 C1143.7,1574.8 1149.9,1576.2 1155.4,1579.5 C1160.9,1582.8 1163.0,1582.7 1164.8,1591.3 C1166.6,1599.9 1165.3,1619.4 1166.0,1631.2 C1166.7,1643.0 1167.7,1654.2 1169.0,1662.0 C1170.3,1669.8 1171.9,1674.1 1174.0,1678.0 C1176.1,1681.9 1174.9,1681.1 1181.7,1685.3 C1188.5,1689.5 1200.9,1694.7 1214.9,1703.2 C1229.0,1711.7 1251.1,1727.0 1266.0,1736.4 C1280.9,1745.8 1292.4,1752.2 1304.3,1759.4 C1316.2,1766.6 1329.6,1774.9 1337.5,1779.8 C1345.4,1784.7 1348.8,1785.6 1351.5,1789.0 C1354.2,1792.4 1353.1,1791.5 1353.5,1800.0 C1353.9,1808.5 1353.9,1830.2 1354.0,1840.0 C1354.1,1849.8 1355.0,1855.1 1354.0,1859.0 C1353.0,1862.9 1351.2,1862.4 1348.0,1863.5 C1344.8,1864.6 1344.1,1863.8 1335.0,1865.4 C1325.9,1867.0 1306.9,1870.2 1293.2,1873.0 C1279.5,1875.8 1271.4,1879.0 1253.0,1882.0 C1234.6,1885.0 1209.7,1888.8 1182.8,1891.1 C1155.9,1893.4 1120.4,1893.5 1091.4,1895.6 C1062.4,1897.7 1035.1,1899.5 1008.6,1903.9 C982.1,1908.3 951.2,1916.7 932.4,1922.1 C913.6,1927.5 907.5,1931.4 895.9,1936.2 C884.3,1941.0 872.4,1946.1 862.8,1951.1 C853.1,1956.1 846.3,1960.2 838.0,1966.0 C829.7,1971.8 819.5,1979.6 813.1,1985.9 C806.8,1992.2 802.5,1998.6 799.9,2004.1 C797.3,2009.6 797.1,2012.9 797.4,2019.0 C797.7,2025.1 798.3,2033.6 801.5,2040.5 C804.7,2047.4 810.3,2054.3 816.4,2060.4 C822.5,2066.5 831.1,2071.8 838.0,2077.0 C844.9,2082.2 852.6,2088.3 857.8,2091.9 C863.0,2095.5 867.1,2097.4 869.0,2098.5 L0,2099 L0,190 Z" fill="#2f3b72"/><defs><radialGradient id="spk1"><stop offset="0" stop-color="#0a2aa0" stop-opacity="0.95"/><stop offset="0.6" stop-color="#0a2aa0" stop-opacity="0.5"/><stop offset="1" stop-color="#0a2aa0" stop-opacity="0"/></radialGradient><radialGradient id="spk2"><stop offset="0" stop-color="#7a1aa0" stop-opacity="0.9"/><stop offset="0.7" stop-color="#5a20b0" stop-opacity="0.5"/><stop offset="1" stop-color="#5a20b0" stop-opacity="0"/></radialGradient><filter id="gb2" x="-20%" y="-20%" width="140%" height="140%"><feGaussianBlur stdDeviation="4"/></filter><clipPath id="bclip"><path d="M2578.0,191.0 C2601.8,224.2 2674.2,325.4 2721.0,390.0 C2767.8,454.6 2813.4,516.5 2859.0,578.6 C2904.6,640.7 2963.6,720.5 2994.4,762.4 C3025.2,804.3 3030.7,811.1 3044.0,829.8 C3057.3,848.5 3064.1,856.3 3074.0,874.5 C3083.9,892.7 3095.7,920.8 3103.7,939.0 C3111.7,957.2 3118.6,969.8 3122.0,983.9 C3125.4,998.0 3125.2,1012.2 3124.0,1023.6 C3122.8,1035.0 3119.0,1046.9 3115.0,1052.0 C3111.0,1057.1 3107.7,1054.6 3100.0,1054.0 C3092.3,1053.4 3084.1,1054.1 3069.0,1048.4 C3053.9,1042.7 3030.0,1029.1 3009.7,1020.0 C2989.4,1010.9 2973.2,1005.7 2947.0,994.0 C2920.8,982.3 2884.2,963.6 2852.8,950.0 C2821.4,936.4 2790.1,925.1 2758.7,912.6 C2727.3,900.1 2696.0,887.6 2664.6,875.0 C2633.2,862.4 2601.9,848.0 2570.5,837.0 C2539.1,826.0 2506.7,817.0 2476.4,809.0 C2446.2,801.0 2415.2,795.0 2389.0,789.0 C2362.8,783.0 2342.3,778.6 2319.0,772.8 C2295.7,767.0 2272.7,759.7 2249.4,754.1 C2226.2,748.5 2206.7,744.2 2179.5,739.0 C2152.3,733.8 2117.5,729.3 2086.4,722.7 C2055.3,716.1 2031.1,706.5 1993.2,699.4 C1955.3,692.3 1895.0,685.8 1858.8,680.0 C1822.6,674.2 1799.0,668.6 1776.0,664.9 C1753.0,661.2 1743.8,659.6 1720.8,658.0 C1697.8,656.4 1657.6,655.5 1638.0,655.2 C1618.4,654.9 1610.3,655.0 1603.0,656.0 C1595.7,657.0 1595.8,656.5 1594.0,661.0 C1592.2,665.5 1591.6,672.3 1592.5,682.8 C1593.4,693.3 1596.0,709.5 1599.4,724.2 C1602.8,738.9 1606.6,754.9 1613.0,771.0 C1619.4,787.1 1629.2,804.2 1638.0,820.8 C1646.8,837.4 1655.8,854.0 1665.6,870.5 C1675.4,887.0 1686.9,900.4 1697.0,920.0 C1707.1,939.6 1716.7,963.7 1726.0,988.0 C1735.3,1012.3 1745.9,1046.5 1753.0,1066.0 C1760.1,1085.5 1764.4,1091.8 1768.5,1105.0 C1772.6,1118.2 1776.4,1132.0 1777.4,1145.5 C1778.4,1159.0 1776.9,1172.0 1774.5,1186.0 C1772.1,1200.0 1766.8,1216.5 1762.9,1229.6 C1759.0,1242.6 1756.6,1253.2 1751.3,1264.3 C1746.0,1275.4 1738.7,1285.1 1731.0,1296.2 C1723.3,1307.3 1713.2,1322.8 1705.0,1331.0 C1696.8,1339.2 1689.4,1342.1 1681.7,1345.5 C1674.0,1348.9 1674.2,1350.0 1658.6,1351.3 C1643.0,1352.5 1613.8,1353.7 1588.0,1353.0 C1562.2,1352.3 1534.9,1350.6 1503.6,1347.0 C1472.3,1343.4 1432.7,1337.5 1400.0,1331.2 C1367.3,1324.9 1334.2,1317.8 1307.2,1309.0 C1280.2,1300.2 1261.2,1290.2 1238.2,1278.7 C1215.2,1267.2 1189.9,1252.0 1169.2,1240.0 C1148.5,1228.0 1132.4,1218.0 1114.0,1207.0 C1095.6,1196.0 1077.2,1184.8 1058.8,1173.8 C1040.4,1162.8 1034.9,1152.7 1003.6,1140.7 C972.3,1128.7 903.2,1107.5 871.0,1102.0 C838.8,1096.5 825.1,1104.4 810.4,1107.6 C795.7,1110.8 792.0,1114.5 782.8,1121.4 C773.6,1128.3 762.6,1139.8 755.2,1149.0 C747.8,1158.2 742.3,1166.5 738.6,1176.6 C734.9,1186.7 733.1,1197.3 733.1,1209.7 C733.1,1222.1 735.4,1237.7 738.6,1251.0 C741.8,1264.3 748.2,1276.9 752.4,1289.8 C756.5,1302.7 760.3,1316.5 763.5,1328.4 C766.7,1340.4 769.0,1350.0 771.8,1361.5 C774.5,1373.0 776.7,1387.7 780.0,1397.4 C783.3,1407.2 786.6,1411.2 791.7,1420.0 C796.8,1428.8 803.9,1442.3 810.5,1450.5 C817.1,1458.7 823.8,1463.4 831.6,1469.3 C839.4,1475.2 848.4,1480.6 857.4,1485.7 C866.4,1490.8 875.0,1495.1 885.6,1499.8 C896.2,1504.5 908.3,1510.0 920.8,1513.9 C933.3,1517.8 947.0,1519.3 960.7,1523.2 C974.4,1527.1 990.0,1533.8 1002.9,1537.3 C1015.8,1540.8 1024.3,1540.9 1038.0,1544.4 C1051.7,1547.9 1069.3,1553.9 1085.0,1558.4 C1100.7,1562.9 1120.3,1567.8 1132.0,1571.3 C1143.7,1574.8 1149.9,1576.2 1155.4,1579.5 C1160.9,1582.8 1163.0,1582.7 1164.8,1591.3 C1166.6,1599.9 1165.3,1619.4 1166.0,1631.2 C1166.7,1643.0 1167.7,1654.2 1169.0,1662.0 C1170.3,1669.8 1171.9,1674.1 1174.0,1678.0 C1176.1,1681.9 1174.9,1681.1 1181.7,1685.3 C1188.5,1689.5 1200.9,1694.7 1214.9,1703.2 C1229.0,1711.7 1251.1,1727.0 1266.0,1736.4 C1280.9,1745.8 1292.4,1752.2 1304.3,1759.4 C1316.2,1766.6 1329.6,1774.9 1337.5,1779.8 C1345.4,1784.7 1348.8,1785.6 1351.5,1789.0 C1354.2,1792.4 1353.1,1791.5 1353.5,1800.0 C1353.9,1808.5 1353.9,1830.2 1354.0,1840.0 C1354.1,1849.8 1355.0,1855.1 1354.0,1859.0 C1353.0,1862.9 1351.2,1862.4 1348.0,1863.5 C1344.8,1864.6 1344.1,1863.8 1335.0,1865.4 C1325.9,1867.0 1306.9,1870.2 1293.2,1873.0 C1279.5,1875.8 1271.4,1879.0 1253.0,1882.0 C1234.6,1885.0 1209.7,1888.8 1182.8,1891.1 C1155.9,1893.4 1120.4,1893.5 1091.4,1895.6 C1062.4,1897.7 1035.1,1899.5 1008.6,1903.9 C982.1,1908.3 951.2,1916.7 932.4,1922.1 C913.6,1927.5 907.5,1931.4 895.9,1936.2 C884.3,1941.0 872.4,1946.1 862.8,1951.1 C853.1,1956.1 846.3,1960.2 838.0,1966.0 C829.7,1971.8 819.5,1979.6 813.1,1985.9 C806.8,1992.2 802.5,1998.6 799.9,2004.1 C797.3,2009.6 797.1,2012.9 797.4,2019.0 C797.7,2025.1 798.3,2033.6 801.5,2040.5 C804.7,2047.4 810.3,2054.3 816.4,2060.4 C822.5,2066.5 831.1,2071.8 838.0,2077.0 C844.9,2082.2 852.6,2088.3 857.8,2091.9 C863.0,2095.5 867.1,2097.4 869.0,2098.5 L0,2099 L0,190 Z"/></clipPath></defs><g clip-path="url(#bclip)"><ellipse cx="2955" cy="978" rx="78" ry="30" transform="rotate(25 2955 978)" fill="url(#spk1)"/><ellipse cx="2885" cy="952" rx="40" ry="12" transform="rotate(24 2885 952)" fill="url(#spk1)" opacity="0.7"/><path d="M3010.0,1028.0 C3019.2,1031.0 3050.0,1043.0 3065.0,1046.0 C3080.0,1049.0 3091.7,1048.7 3100.0,1046.0 C3108.3,1043.3 3112.5,1038.0 3115.0,1030.0 C3117.5,1022.0 3116.5,1009.3 3115.0,998.0 C3113.5,986.7 3110.2,973.7 3106.0,962.0 C3101.8,950.3 3092.7,933.7 3090.0,928.0" fill="none" stroke="#6a22b0" stroke-width="26" stroke-opacity="0.75" filter="url(#gb2)"/><ellipse cx="1210" cy="1880" rx="34" ry="9" fill="url(#spk1)"/><ellipse cx="1340" cy="1830" rx="9" ry="20" fill="url(#spk1)" opacity="0.8"/><ellipse cx="1349" cy="1797" rx="5" ry="8" fill="#7a1060" opacity="0.55"/></g><path d="M1138.0,2098.5 C1143.2,2094.0 1156.6,2080.7 1169.0,2071.3 C1181.4,2061.9 1198.0,2051.5 1212.5,2042.3 C1227.0,2033.1 1239.1,2024.9 1256.0,2016.2 C1272.9,2007.5 1292.3,1999.2 1314.0,1990.0 C1335.7,1980.8 1362.3,1970.8 1386.4,1961.2 C1410.5,1951.6 1437.1,1941.4 1458.8,1932.2 C1480.5,1923.0 1499.9,1914.7 1516.8,1906.0 C1533.7,1897.3 1548.2,1889.2 1560.3,1880.0 C1572.4,1870.8 1585.4,1860.2 1589.3,1851.0 C1593.2,1841.8 1586.9,1836.6 1583.5,1825.0 C1580.1,1813.4 1574.3,1798.3 1569.0,1781.4 C1563.7,1764.5 1556.4,1740.4 1551.6,1723.5 C1546.8,1706.6 1542.7,1693.1 1540.0,1680.0 C1537.3,1666.9 1534.9,1654.1 1535.2,1645.0 C1535.5,1635.9 1534.4,1632.2 1541.8,1625.2 C1549.2,1618.2 1563.9,1612.2 1579.4,1603.0 C1594.9,1593.8 1616.2,1580.7 1634.6,1570.0 C1653.0,1559.3 1672.1,1548.6 1689.8,1539.0 C1707.5,1529.4 1725.9,1521.3 1740.6,1512.5 C1755.3,1503.7 1766.4,1495.9 1778.2,1486.0 C1790.0,1476.1 1802.1,1464.3 1811.3,1452.9 C1820.5,1441.5 1826.9,1429.7 1833.4,1417.5 C1839.9,1405.3 1846.6,1392.1 1850.5,1380.0 C1854.4,1367.9 1855.3,1358.3 1857.0,1345.0 C1858.7,1331.7 1859.6,1317.5 1860.5,1300.0 C1861.4,1282.5 1863.5,1257.8 1862.5,1240.0 C1861.5,1222.2 1856.8,1214.9 1854.6,1193.3 C1852.3,1171.7 1849.7,1136.7 1849.0,1110.5 C1848.3,1084.3 1848.6,1050.4 1850.4,1035.9 C1852.2,1021.4 1853.4,1024.9 1860.1,1023.5 C1866.8,1022.1 1876.2,1023.2 1890.5,1027.6 C1904.8,1032.0 1925.0,1040.5 1945.7,1049.7 C1966.4,1058.9 1994.0,1071.3 2014.7,1082.8 C2035.4,1094.3 2051.6,1106.8 2070.0,1118.8 C2088.4,1130.8 2100.6,1137.2 2125.2,1154.7 C2149.8,1172.2 2185.9,1201.6 2217.4,1224.0 C2248.9,1246.4 2281.8,1268.5 2314.0,1289.0 C2346.2,1309.5 2373.3,1323.0 2410.6,1347.0 C2447.9,1371.0 2489.1,1401.5 2538.0,1433.0 C2586.9,1464.5 2643.7,1500.2 2704.0,1536.0 C2764.3,1571.8 2848.9,1618.0 2900.0,1648.0 C2951.1,1678.0 2973.6,1692.7 3010.4,1716.0 C3047.2,1739.3 3084.0,1764.2 3120.8,1787.7 C3157.6,1811.2 3199.0,1836.0 3231.2,1856.7 C3263.4,1877.4 3290.5,1896.0 3314.0,1912.0 C3337.5,1928.0 3362.3,1946.2 3372.0,1953.0 L3372,2099 Z" fill="#6b6b6b"/><clipPath id="gclip2"><path d="M1138.0,2098.5 C1143.2,2094.0 1156.6,2080.7 1169.0,2071.3 C1181.4,2061.9 1198.0,2051.5 1212.5,2042.3 C1227.0,2033.1 1239.1,2024.9 1256.0,2016.2 C1272.9,2007.5 1292.3,1999.2 1314.0,1990.0 C1335.7,1980.8 1362.3,1970.8 1386.4,1961.2 C1410.5,1951.6 1437.1,1941.4 1458.8,1932.2 C1480.5,1923.0 1499.9,1914.7 1516.8,1906.0 C1533.7,1897.3 1548.2,1889.2 1560.3,1880.0 C1572.4,1870.8 1585.4,1860.2 1589.3,1851.0 C1593.2,1841.8 1586.9,1836.6 1583.5,1825.0 C1580.1,1813.4 1574.3,1798.3 1569.0,1781.4 C1563.7,1764.5 1556.4,1740.4 1551.6,1723.5 C1546.8,1706.6 1542.7,1693.1 1540.0,1680.0 C1537.3,1666.9 1534.9,1654.1 1535.2,1645.0 C1535.5,1635.9 1534.4,1632.2 1541.8,1625.2 C1549.2,1618.2 1563.9,1612.2 1579.4,1603.0 C1594.9,1593.8 1616.2,1580.7 1634.6,1570.0 C1653.0,1559.3 1672.1,1548.6 1689.8,1539.0 C1707.5,1529.4 1725.9,1521.3 1740.6,1512.5 C1755.3,1503.7 1766.4,1495.9 1778.2,1486.0 C1790.0,1476.1 1802.1,1464.3 1811.3,1452.9 C1820.5,1441.5 1826.9,1429.7 1833.4,1417.5 C1839.9,1405.3 1846.6,1392.1 1850.5,1380.0 C1854.4,1367.9 1855.3,1358.3 1857.0,1345.0 C1858.7,1331.7 1859.6,1317.5 1860.5,1300.0 C1861.4,1282.5 1863.5,1257.8 1862.5,1240.0 C1861.5,1222.2 1856.8,1214.9 1854.6,1193.3 C1852.3,1171.7 1849.7,1136.7 1849.0,1110.5 C1848.3,1084.3 1848.6,1050.4 1850.4,1035.9 C1852.2,1021.4 1853.4,1024.9 1860.1,1023.5 C1866.8,1022.1 1876.2,1023.2 1890.5,1027.6 C1904.8,1032.0 1925.0,1040.5 1945.7,1049.7 C1966.4,1058.9 1994.0,1071.3 2014.7,1082.8 C2035.4,1094.3 2051.6,1106.8 2070.0,1118.8 C2088.4,1130.8 2100.6,1137.2 2125.2,1154.7 C2149.8,1172.2 2185.9,1201.6 2217.4,1224.0 C2248.9,1246.4 2281.8,1268.5 2314.0,1289.0 C2346.2,1309.5 2373.3,1323.0 2410.6,1347.0 C2447.9,1371.0 2489.1,1401.5 2538.0,1433.0 C2586.9,1464.5 2643.7,1500.2 2704.0,1536.0 C2764.3,1571.8 2848.9,1618.0 2900.0,1648.0 C2951.1,1678.0 2973.6,1692.7 3010.4,1716.0 C3047.2,1739.3 3084.0,1764.2 3120.8,1787.7 C3157.6,1811.2 3199.0,1836.0 3231.2,1856.7 C3263.4,1877.4 3290.5,1896.0 3314.0,1912.0 C3337.5,1928.0 3362.3,1946.2 3372.0,1953.0 L3372,2099 Z"/></clipPath><g clip-path="url(#gclip2)"><path d="M1550.0,1632.0 C1548.3,1635.0 1540.8,1642.0 1540.0,1650.0 C1539.2,1658.0 1542.2,1667.8 1545.0,1680.0 C1547.8,1692.2 1552.2,1706.6 1557.0,1723.5 C1561.8,1740.4 1568.8,1764.5 1574.0,1781.4 C1579.2,1798.3 1585.3,1813.4 1588.5,1825.0 C1591.7,1836.6 1594.8,1843.5 1593.0,1851.0 C1591.2,1858.5 1580.5,1866.8 1578.0,1870.0" fill="none" stroke="#4f8f9a" stroke-width="10" stroke-opacity="0.4" filter="url(#gb)"/></g><polygon points="3318.0,191.0 3371.0,191.0 3371.0,273.0" fill="#6b6b6b"/></svg><div class="r" style="left:3371px;top:191px;width:21px;height:1907px;background:#3c3c3c;"></div><div class="r" style="left:3372px;top:191px;width:20px;height:20px;background:#3f3f3f;border:1px solid #555;box-sizing:border-box"></div><div class="r" style="left:3372px;top:2078px;width:20px;height:20px;background:#3f3f3f;border:1px solid #555;box-sizing:border-box"></div><div class="r" style="left:3372px;top:1052px;width:20px;height:146px;background:#434343;border:1px solid #5a5a5a;box-sizing:border-box"></div><div class="r" style="left:0px;top:2098px;width:3371px;height:21px;background:#3b3b3b;"></div><div class="r" style="left:0px;top:2099px;width:21px;height:20px;background:#3f3f3f;border:1px solid #555;box-sizing:border-box"></div><div class="r" style="left:3350px;top:2099px;width:21px;height:20px;background:#3f3f3f;border:1px solid #555;box-sizing:border-box"></div><div class="r" style="left:1430px;top:2099px;width:484px;height:20px;background:#424242;border:1px solid #555;box-sizing:border-box"></div><svg class="r" style="left:0;top:2098px" width="21" height="21"><path d="M6 10.5 L13 5 L13 16 Z" fill="#aaa"/></svg><svg class="r" style="left:3350px;top:2098px" width="21" height="21"><path d="M15 10.5 L8 5 L8 16 Z" fill="#aaa"/></svg><svg class="r" style="left:3371px;top:191px" width="21" height="20"><path d="M4 13 L10.5 7 L17 13 Z" fill="#aaa"/></svg><svg class="r" style="left:3371px;top:2078px" width="21" height="20"><path d="M4 7 L10.5 13 L17 7 Z" fill="#aaa"/></svg><div class="r" style="left:3402px;top:146px;width:101px;height:35px;background:#3d3d3d;border:1px solid #555;border-bottom:none;border-radius:3px 3px 0 0;box-sizing:border-box"></div><div class="r" style="left:3504px;top:144px;width:204px;height:37px;background:#474747;border:1px solid #555;border-bottom:none;border-radius:3px 3px 0 0;box-sizing:border-box"></div><div class="r" style="left:3708px;top:180px;width:132px;height:1px;background:#555"></div><div class="r" style="left:3402px;top:180px;width:102px;height:1px;background:#555"></div><div class="t" style="left:3419px;top:157.43px;font-size:15.8px;color:#d6d6d6;font-weight:normal;">Overview</div><div class="t" style="left:3521px;top:156.93px;font-size:15.8px;color:#d6d6d6;font-weight:normal;">Advanced Color Selector</div><svg class="r" style="left:3402px;top:183px;" width="17" height="17" viewBox="0 0 17 17"><circle cx="8.5" cy="8.5" r="7.6" fill="none" stroke="#d4d4d4" stroke-width="1.1"/><path d="M5.5 7.5 V6 A3 3 0 0 1 11.5 6" fill="none" stroke="#d4d4d4" stroke-width="1.3"/><rect x="4.5" y="8" width="8" height="4.5" fill="#d4d4d4"/></svg><div class="t" style="left:3425px;top:186.93px;font-size:15.8px;color:#d6d6d6;font-weight:normal;">Advanced Color Selector</div><svg class="r" style="left:3801px;top:184px;" width="15" height="15" viewBox="0 0 15 15"><rect x="0.7" y="5.5" width="8" height="8" fill="none" stroke="#d4d4d4" stroke-width="1.3"/><path d="M5 5.5 V1 H14 V9.5 H8.7" fill="none" stroke="#d4d4d4" stroke-width="1.3"/></svg><svg class="r" style="left:3824px;top:184px;" width="15" height="15" viewBox="0 0 15 15"><path d="M1 1 L13.5 13.5 M13.5 1 L1 13.5" fill="none" stroke="#d4d4d4" stroke-width="1.3"/></svg><svg class="r" style="left:3405px;top:207px;" width="25" height="25" viewBox="0 0 25 25"><rect x="1" y="1" width="23" height="23" fill="none" stroke="#d4d4d4" stroke-width="1.6"/><rect x="1" y="1" width="23" height="3" fill="#d4d4d4"/><rect x="5" y="8" width="2.5" height="12" fill="#d4d4d4"/><rect x="10" y="9" width="10" height="2" fill="#d4d4d4"/><rect x="10" y="13.5" width="10" height="2" fill="#d4d4d4"/><rect x="10" y="18" width="10" height="2" fill="#d4d4d4"/></svg><div class="r" style="left:3823px;top:204px;width:17px;height:516px;background:#3a3a3a"></div><svg class="r" style="left:3823px;top:204px;" width="17" height="16" viewBox="0 0 17 16"><circle cx="8.5" cy="8" r="5.5" fill="none" stroke="#d4d4d4" stroke-width="1.6"/><path d="M4.8 4.3 L12.2 11.7" fill="none" stroke="#d4d4d4" stroke-width="1.6"/></svg><div class="r" style="left:3823px;top:220.00px;width:16px;height:16.1px;background:#6b6b6b"></div><div class="r" style="left:3823px;top:236.05px;width:16px;height:16.1px;background:#008989"></div><div class="r" style="left:3823px;top:252.10px;width:16px;height:16.1px;background:#e9aaa2"></div><div class="r" style="left:3823px;top:268.15px;width:16px;height:16.1px;background:#f2709c"></div><div class="r" style="left:3823px;top:284.20px;width:16px;height:16.1px;background:#a572a2"></div><div class="r" style="left:3823px;top:300.25px;width:16px;height:16.1px;background:#ef7462"></div><div class="r" style="left:3823px;top:316.30px;width:16px;height:16.1px;background:#a8726a"></div><div class="r" style="left:3823px;top:332.35px;width:16px;height:16.1px;background:#ef786a"></div><div class="r" style="left:3823px;top:348.40px;width:16px;height:16.1px;background:#f6a064"></div><div class="r" style="left:3823px;top:364.45px;width:16px;height:16.1px;background:#e8786a"></div><div class="r" style="left:3823px;top:380.50px;width:16px;height:16.1px;background:#6e6a2e"></div><div class="r" style="left:3823px;top:396.55px;width:16px;height:16.1px;background:#6e6e6e"></div><div class="r" style="left:3823px;top:412.60px;width:16px;height:16.1px;background:#6c6c6c"></div><div class="r" style="left:3823px;top:428.65px;width:16px;height:16.1px;background:#a4a4aa"></div><div class="r" style="left:3823px;top:444.70px;width:16px;height:16.1px;background:#b03434"></div><div class="r" style="left:3823px;top:460.75px;width:16px;height:16.1px;background:#703434"></div><div class="r" style="left:3823px;top:476.80px;width:16px;height:16.1px;background:#b06a32"></div><div class="r" style="left:3823px;top:492.85px;width:16px;height:16.1px;background:#6e5650"></div><div class="r" style="left:3823px;top:508.90px;width:16px;height:16.1px;background:#6e6e6e"></div><div class="r" style="left:3823px;top:524.95px;width:16px;height:16.1px;background:#6e3068"></div><div class="r" style="left:3823px;top:541.00px;width:16px;height:16.1px;background:#b06a2a"></div><div class="r" style="left:3403.0px;top:235.0px;width:419.0px;height:419.0px;border-radius:50%;background:conic-gradient(from 270deg,#ff0000,#ffff00,#00ff00,#00ffff,#0000ff,#ff00ff,#ff0000);-webkit-mask:radial-gradient(circle,transparent 176.5px,#000 177.5px);mask:radial-gradient(circle,transparent 176.5px,#000 177.5px)"></div><div class="r" style="left:3459.21px;top:267.50px;width:306.57px;height:265.50px;clip-path:polygon(50% 0,100% 100%,0 100%);background:linear-gradient(to bottom,rgba(0,0,0,1),rgba(0,0,0,0)),conic-gradient(from 150deg at 50% 0%,#00ffff 0deg,#ffffff 60deg,#ffffff 360deg)"></div><svg class="r" style="left:3687px;top:403px;" width="14" height="14" viewBox="0 0 14 14"><circle cx="7" cy="7" r="5" fill="none" stroke="#111" stroke-width="1.5"/><circle cx="7" cy="7" r="3.8" fill="none" stroke="#ddd" stroke-width="1"/></svg><div class="r" style="left:3789px;top:449px;width:33px;height:1.5px;background:#111"></div><div class="r" style="left:3789px;top:451px;width:33px;height:1.5px;background:#eee"></div><div class="r" style="left:3402px;top:687px;width:421px;height:34px;background:#3a3a3a"></div><div class="r" style="left:3402px;top:688px;width:421px;height:10px;background:linear-gradient(90deg,#007a34,#00897f 50%,#003a8a 90%,#002a88)"></div><div class="r" style="left:3402px;top:699px;width:421px;height:10px;background:linear-gradient(90deg,#000,#00ffff)"></div><div class="r" style="left:3402px;top:710px;width:421px;height:10px;background:linear-gradient(90deg,#000,#008989 50%,#80ffff)"></div><div class="r" style="left:3607px;top:688px;width:10px;height:10px;border-left:1px solid #ccc;border-right:1px solid #ccc;box-sizing:border-box"></div><div class="r" style="left:3607px;top:699px;width:10px;height:10px;border-left:1px solid #ccc;border-right:1px solid #ccc;box-sizing:border-box"></div><div class="r" style="left:3607px;top:710px;width:10px;height:10px;border-left:1px solid #ccc;border-right:1px solid #ccc;box-sizing:border-box"></div><div class="r" style="left:3402px;top:722px;width:438px;height:17px;background:#3a3a3a"></div><svg class="r" style="left:3404px;top:724px;" width="14" height="14" viewBox="0 0 14 14"><path d="M2 8 A5 5 0 0 1 10.5 3" fill="none" stroke="#d4d4d4" stroke-width="1.5"/><path d="M12 6 A5 5 0 0 1 3.5 11" fill="none" stroke="#d4d4d4" stroke-width="1.5"/><path d="M9 1 L12.5 1 L12.5 4.5Z" fill="#d4d4d4"/><path d="M5 13 L1.5 13 L1.5 9.5Z" fill="#d4d4d4"/></svg><div class="r" style="left:3614px;top:744px;width:17px;height:2px;background:repeating-linear-gradient(90deg,#888 0 2px,transparent 2px 3px)"></div><svg class="r" style="left:3402px;top:751px;" width="17" height="17" viewBox="0 0 17 17"><circle cx="8.5" cy="8.5" r="7.6" fill="none" stroke="#d4d4d4" stroke-width="1.1"/><path d="M5.5 7.5 V6 A3 3 0 0 1 11.5 6" fill="none" stroke="#d4d4d4" stroke-width="1.3"/><rect x="4.5" y="8" width="8" height="4.5" fill="#d4d4d4"/></svg><div class="t" style="left:3425.5px;top:754.03px;font-size:15.8px;color:#d6d6d6;font-weight:normal;">Layers</div><svg class="r" style="left:3801px;top:752px;" width="15" height="15" viewBox="0 0 15 15"><rect x="0.7" y="5.5" width="8" height="8" fill="none" stroke="#d4d4d4" stroke-width="1.3"/><path d="M5 5.5 V1 H14 V9.5 H8.7" fill="none" stroke="#d4d4d4" stroke-width="1.3"/></svg><svg class="r" style="left:3824px;top:752px;" width="15" height="15" viewBox="0 0 15 15"><path d="M1 1 L13.5 13.5 M13.5 1 L1 13.5" fill="none" stroke="#d4d4d4" stroke-width="1.3"/></svg><div class="r" style="left:3403px;top:772px;width:402px;height:30px;background:linear-gradient(#4a4a4a,#434343);border:1px solid #353535;border-radius:3px;box-sizing:border-box"></div><div class="t" style="left:3408px;top:781.23px;font-size:15.8px;color:#d6d6d6;font-weight:normal;">Normal</div><svg class="r" style="left:3783px;top:784px;" width="12" height="7" viewBox="0 0 12 7"><path d="M0 0 H12 L6 6 Z" fill="#9a9a9a"/></svg><svg class="r" style="left:3815px;top:777px;" width="25" height="24" viewBox="0 0 25 24"><path d="M1 1.5 H15 L9.5 9 V18 L6.5 16 V9 Z" fill="none" stroke="#d4d4d4" stroke-width="1.4"/><path d="M13 15 H23 L18 20 Z" fill="#9a9a9a"/></svg><div class="r" style="left:3403px;top:806px;width:402px;height:29px;background:#3a3a3a;border:1px solid #353535;border-radius:3px;box-sizing:border-box"></div><div class="r" style="left:3404px;top:807px;width:380px;height:27px;background:#547494;border-radius:2px 0 0 2px"></div><div class="t" style="left:3541px;top:814.43px;font-size:15.8px;color:#d6d6d6;font-weight:normal;">Opacity:&nbsp; 100%</div><svg class="r" style="left:3785px;top:806px;" width="20" height="29" viewBox="0 0 20 29"><path d="M4 12 L10 6.5 L16 12 Z" fill="#5c5c5c"/><path d="M4 17 L10 22.5 L16 17 Z" fill="#5c5c5c"/></svg><svg class="r" style="left:3816px;top:813px;" width="24" height="20" viewBox="0 0 24 20"><rect x="1" y="2" width="12" height="1.8" fill="#d4d4d4"/><rect x="1" y="6" width="12" height="1.8" fill="#d4d4d4"/><rect x="1" y="10" width="12" height="1.8" fill="#d4d4d4"/><path d="M10 13 H21 L15.5 18.5 Z" fill="#9a9a9a"/></svg><div class="r" style="left:3402px;top:838px;width:438px;height:265px;background:#353535"></div><div class="r" style="left:3447px;top:839px;width:391px;height:26px;background:#557590"></div><svg class="r" style="left:3406px;top:843px;" width="16" height="18" viewBox="0 0 16 18"><path d="M1 9 Q8 1 15 9 Q8 17 1 9Z" fill="#d4d4d4"/><circle cx="8" cy="9" r="3" fill="#353535"/><circle cx="8" cy="9" r="1.8" fill="#d4d4d4"/><path d="M1 11 Q8 18 15 11" fill="none" stroke="#d4d4d4" stroke-width="1"/></svg><div class="r" style="left:3429px;top:846px;width:14px;height:14px;background:#2e2e2e"></div><svg class="r" style="left:3430px;top:847px;" width="12" height="12" viewBox="0 0 12 12"><path d="M2.5 6.5 L5 9.5 L10 2" fill="none" stroke="#d4d4d4" stroke-width="1.8"/></svg><div class="r" style="left:3452px;top:842px;width:17px;height:21px;background:linear-gradient(160deg,#2a50a0 0%,#203070 40%,#e06040 80%,#f0a060 100%);border:1px solid #ddd;box-sizing:border-box"></div><svg class="r" style="left:3477px;top:840px;" width="11" height="11" viewBox="0 0 11 11"><path d="M1 0.5 H10 V7 L7 10 H3" fill="none" stroke="#d4d4d4" stroke-width="1"/><path d="M1 3 L6 8" fill="none" stroke="#d4d4d4" stroke-width="1"/></svg><div class="t" style="left:3491.6px;top:846.03px;font-size:15.8px;color:#e0e0e0;font-weight:bold;">Background</div><svg class="r" style="left:3783px;top:845px;" width="56" height="16" viewBox="0 0 56 16"><path d="M1 7 H13 V15 H1Z" fill="#7a96b0"/><path d="M3 7 V5 A4 4 0 0 1 11 4" stroke="#7a96b0" stroke-width="1.6" fill="none"/><text x="19" y="13" font-family="Liberation Serif" font-style="italic" font-size="17" fill="#7a96b0">α</text><rect x="38" y="1" width="5" height="5" fill="#7a96b0"/><rect x="48" y="1" width="5" height="5" fill="#7a96b0"/><rect x="43" y="6" width="5" height="5" fill="#7a96b0"/><rect x="38" y="11" width="5" height="5" fill="#7a96b0"/><rect x="48" y="11" width="5" height="5" fill="#7a96b0"/></svg><svg class="r" style="left:3407px;top:1108px;" width="20" height="20" viewBox="0 0 20 20"><path d="M10 1 V19 M1 10 H19" fill="none" stroke="#d4d4d4" stroke-width="1.8"/></svg><svg class="r" style="left:3435px;top:1114px;" width="12" height="7" viewBox="0 0 12 7"><path d="M0 0 H12 L6 6 Z" fill="#9a9a9a"/></svg><svg class="r" style="left:3456px;top:1107px;" width="22" height="22" viewBox="0 0 22 22"><rect x="6" y="1" width="14" height="14" fill="none" stroke="#d4d4d4" stroke-width="1.8"/><path d="M1.5 6 V20.5 H16" fill="none" stroke="#d4d4d4" stroke-width="1.8"/></svg><svg class="r" style="left:3489px;top:1110px;" width="21" height="14" viewBox="0 0 21 14"><path d="M1 2 L10.5 11 L20 2" fill="none" stroke="#d4d4d4" stroke-width="1.8"/></svg><svg class="r" style="left:3521px;top:1110px;" width="21" height="14" viewBox="0 0 21 14"><path d="M1 12 L10.5 3 L20 12" fill="none" stroke="#d4d4d4" stroke-width="1.8"/></svg><svg class="r" style="left:3553px;top:1109px;" width="21" height="18" viewBox="0 0 21 18"><path d="M0 3 H20 M0 9 H20 M0 15 H20" fill="none" stroke="#d4d4d4" stroke-width="1.6"/><rect x="12" y="1" width="3" height="4" fill="#d4d4d4"/><rect x="5" y="7" width="3" height="4" fill="#d4d4d4"/><rect x="10" y="13" width="3" height="4" fill="#d4d4d4"/></svg><svg class="r" style="left:3581px;top:1114px;" width="12" height="7" viewBox="0 0 12 7"><path d="M0 0 H12 L6 6 Z" fill="#9a9a9a"/></svg><svg class="r" style="left:3814px;top:1107px;" width="20" height="22" viewBox="0 0 20 22"><path d="M1 4 H19 M7 4 V1.5 H13 V4" fill="none" stroke="#d4d4d4" stroke-width="1.8"/><path d="M3 7 H17 L16 20 Q16 21 15 21 H5 Q4 21 4 20 Z" fill="#d4d4d4"/></svg><div class="r" style="left:3614px;top:1138px;width:17px;height:2px;background:repeating-linear-gradient(90deg,#888 0 2px,transparent 2px 3px)"></div><div class="r" style="left:3397px;top:1124px;width:2px;height:17px;background:repeating-linear-gradient(180deg,#888 0 2px,transparent 2px 3px)"></div><div class="r" style="left:3402px;top:1146px;width:129px;height:35px;background:#3d3d3d;border:1px solid #555;border-bottom:none;border-radius:3px 3px 0 0;box-sizing:border-box"></div><div class="r" style="left:3532px;top:1143px;width:122px;height:38px;background:#474747;border:1px solid #555;border-bottom:none;border-radius:3px 3px 0 0;box-sizing:border-box"></div><div class="r" style="left:3654px;top:1180px;width:186px;height:1px;background:#555"></div><div class="r" style="left:3402px;top:1180px;width:130px;height:1px;background:#555"></div><div class="t" style="left:3419px;top:1156.93px;font-size:15.8px;color:#d6d6d6;font-weight:normal;">Brush Presets</div><div class="t" style="left:3549.6px;top:1156.63px;font-size:15.8px;color:#d6d6d6;font-weight:normal;">Tool Options</div><svg class="r" style="left:3402px;top:1183px;" width="17" height="17" viewBox="0 0 17 17"><circle cx="8.5" cy="8.5" r="7.6" fill="none" stroke="#d4d4d4" stroke-width="1.1"/><path d="M5.5 7.5 V6 A3 3 0 0 1 11.5 6" fill="none" stroke="#d4d4d4" stroke-width="1.3"/><rect x="4.5" y="8" width="8" height="4.5" fill="#d4d4d4"/></svg><div class="t" style="left:3425.5px;top:1186.38px;font-size:15.8px;color:#d6d6d6;font-weight:normal;">Tool Options</div><svg class="r" style="left:3801px;top:1184px;" width="15" height="15" viewBox="0 0 15 15"><rect x="0.7" y="5.5" width="8" height="8" fill="none" stroke="#d4d4d4" stroke-width="1.3"/><path d="M5 5.5 V1 H14 V9.5 H8.7" fill="none" stroke="#d4d4d4" stroke-width="1.3"/></svg><svg class="r" style="left:3824px;top:1184px;" width="15" height="15" viewBox="0 0 15 15"><path d="M1 1 L13.5 13.5 M13.5 1 L1 13.5" fill="none" stroke="#d4d4d4" stroke-width="1.3"/></svg><div class="t" style="left:3406px;top:1211.38px;font-size:15.8px;color:#d6d6d6;font-weight:normal;">No options</div><div class="r" style="left:3819px;top:2035px;width:42px;height:42px;border-radius:50%;background:#000;border:1.5px solid #2a6a8a;box-sizing:border-box"></div><svg class="r" style="left:3832px;top:2048px;" width="10" height="16" viewBox="0 0 10 16"><path d="M8 1 L2 8 L8 15" fill="none" stroke="#ddd" stroke-width="1.8"/></svg><div class="r" style="left:0px;top:2119px;width:3840px;height:39px;background:#474747;"></div><div class="r" style="left:0px;top:2158px;width:3840px;height:2px;background:#2a2a2a;"></div><div class="r" style="left:1138px;top:2158px;width:240px;height:2px;background:#565656;"></div><svg class="r" style="left:6px;top:2131px" width="16" height="16"><rect x="0.5" y="0.5" width="15" height="15" fill="none" stroke="#ddd"/><circle cx="8" cy="8" r="4.5" fill="none" stroke="#ddd" stroke-dasharray="1.2 1.6"/></svg><div class="t" style="left:1195px;top:2134.19px;font-size:17.5px;color:#d6d6d6;font-weight:normal;letter-spacing:0.2px">RGB/Alpha (8-bit integer/channel)&nbsp; Adobe98</div><div class="r" style="left:3208px;top:2122px;width:211px;height:36px;background:none;border:1px solid #3c3c3c;box-sizing:border-box"></div><div class="r" style="left:3210px;top:2125px;width:6px;height:30px;background:#557a9a;"></div><div class="t" style="left:3213px;top:2133.79px;font-size:17.5px;color:#d6d6d6;font-weight:normal;">6,406 <u>x</u> 7,812 (214.0 MiB)</div><svg class="r" style="left:3426px;top:2123px" width="34" height="34"><circle cx="16.5" cy="16" r="15.5" fill="#2e2e2e"/><line x1="16.5" y1="3" x2="16.5" y2="29" stroke="#555" stroke-dasharray="1 2"/><line x1="3" y1="16" x2="16.5" y2="16" stroke="#555" stroke-dasharray="1 2"/><line x1="16.5" y1="16" x2="30" y2="16" stroke="#eee" stroke-width="1.5"/><circle cx="16.5" cy="16" r="2" fill="#eee"/><circle cx="30" cy="16" r="2" fill="#eee"/></svg><div class="t" style="left:3468px;top:2132.79px;font-size:17.5px;color:#d6d6d6;font-weight:normal;">0.00°</div><div class="t" style="left:3648.5px;top:2132.79px;font-size:17.5px;color:#d6d6d6;font-weight:normal;">266.7%</div><div class="r" style="left:3725px;top:2136px;width:81px;height:8px;background:#383838;border-radius:3px"></div><div class="r" style="left:3725px;top:2137px;width:36px;height:6px;background:#5a84ad;"></div><div class="r" style="left:3760px;top:2130px;width:19px;height:18px;background:#3e3e3e;border:1px solid #5a5a5a;box-sizing:border-box;border-radius:3px"></div><svg class="r" style="left:3810px;top:2130px" width="26" height="22"><rect x="1.5" y="1.5" width="23" height="14" fill="none" stroke="#ddd" stroke-width="1.5"/><rect x="12" y="7.5" width="2" height="2" fill="#ddd"/><path d="M13 16 V20 M6 20.5 H20" stroke="#ddd" stroke-width="1.5"/></svg>
</body></html>
